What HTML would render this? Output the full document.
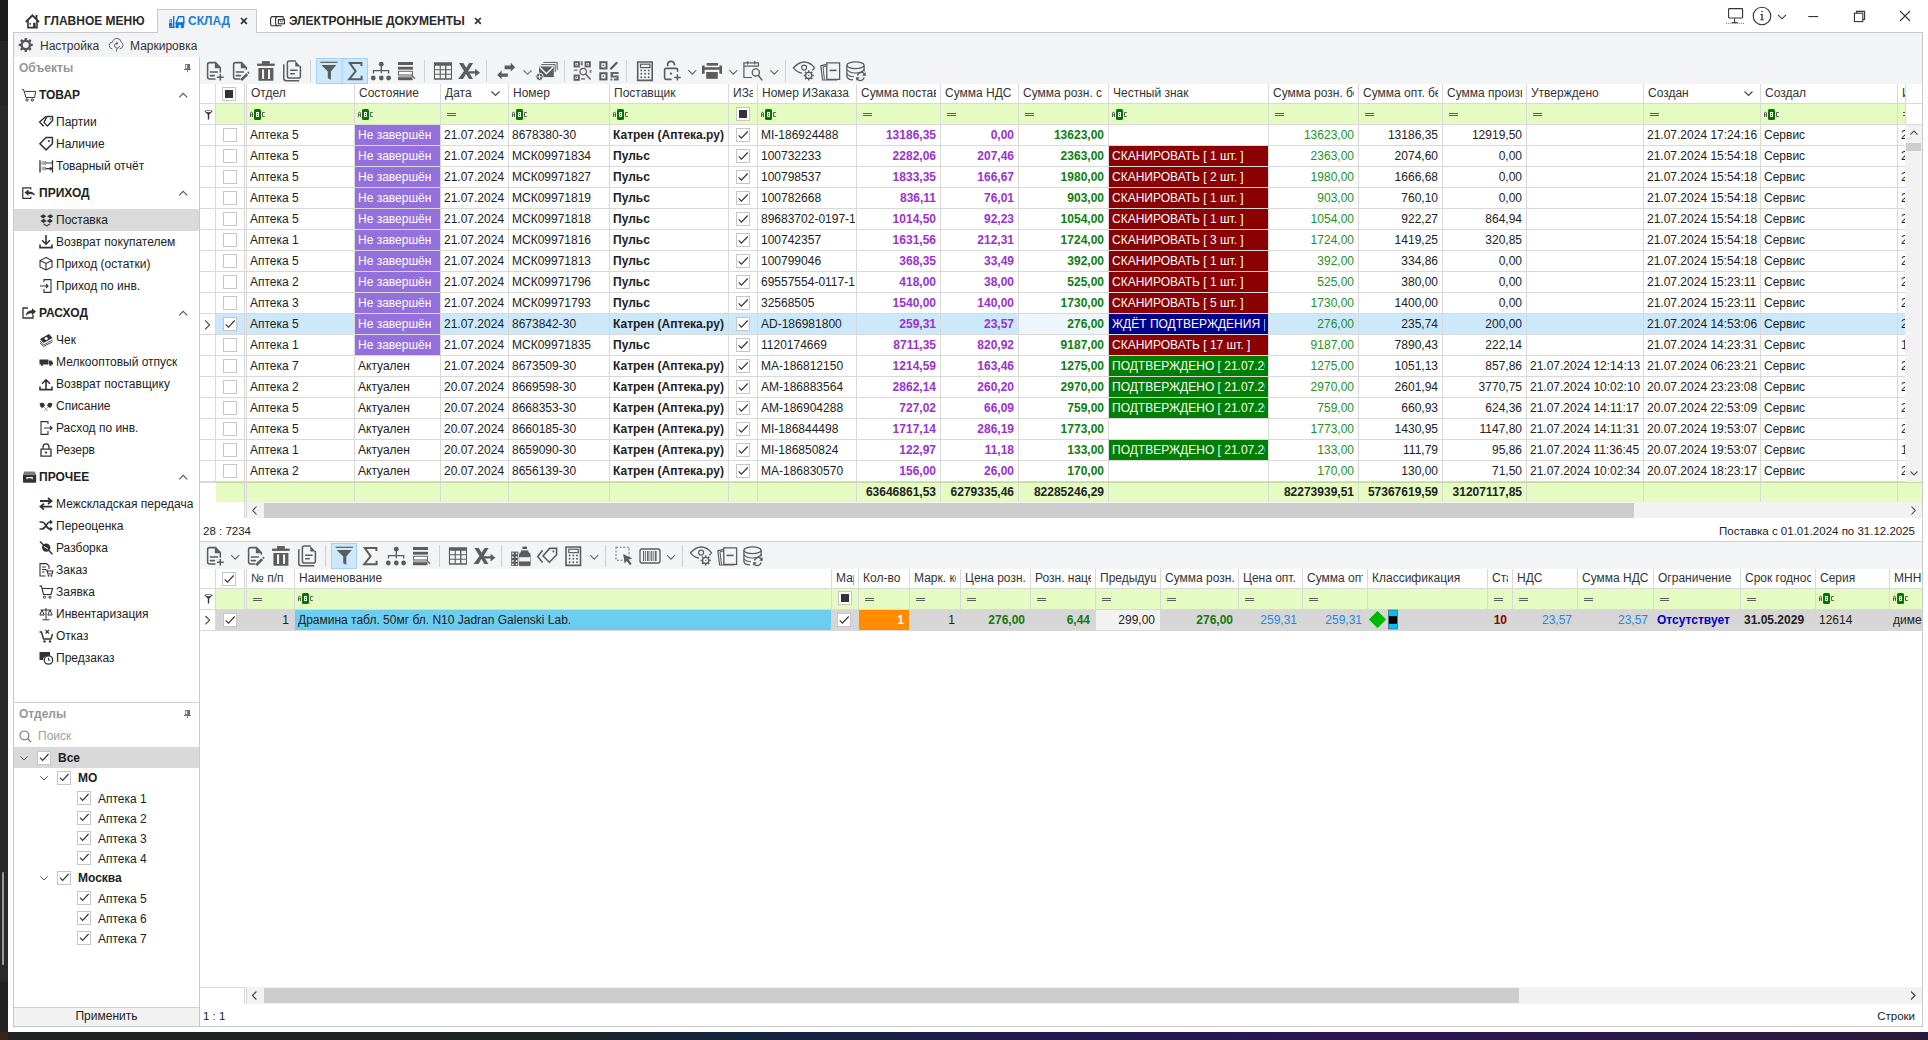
<!DOCTYPE html><html><head><meta charset="utf-8"><style>
*{box-sizing:border-box;margin:0;padding:0}
html,body{width:1928px;height:1040px;overflow:hidden;background:#222}
body{position:relative;font-family:"Liberation Sans",sans-serif;font-size:12px;color:#222}
div{position:absolute}
.t{white-space:nowrap;overflow:hidden}
svg{position:absolute;overflow:visible}
</style></head><body><div style="left:0px;top:0px;width:8px;height:41px;background:#1c1c1c"></div><div style="left:0px;top:41px;width:8px;height:65px;background:#252525"></div><div style="left:0px;top:106px;width:8px;height:876px;background:#2a2a2a"></div><div style="left:0px;top:982px;width:8px;height:50px;background:#222"></div><div style="left:2px;top:872px;width:2px;height:93px;background:#9a9a9a;border-radius:1px"></div><div style="left:0px;top:1032px;width:1928px;height:8px;background:linear-gradient(90deg,#1e2321 0%,#1c2421 28%,#14243c 38%,#1e1a4c 52%,#2a1656 68%,#2a1a48 85%,#2a1a3a 100%)"></div><div style="left:0px;top:1032px;width:8px;height:8px;background:#3a2020"></div><div style="left:8px;top:0px;width:1920px;height:1032px;background:#fff"></div><div style="left:157px;top:9px;width:100px;height:24px;background:#f3f4f6;border:1px solid #c9c9c9;border-bottom:none"></div><div class="t" style="left:44px;top:14px;height:15px;line-height:15px;font-weight:bold;color:#2a2a2a">ГЛАВНОЕ МЕНЮ</div><div class="t" style="left:188px;top:14px;height:15px;line-height:15px;font-weight:bold;color:#1a7fd4">СКЛАД</div><div class="t" style="left:289px;top:14px;height:15px;line-height:15px;font-weight:bold;color:#2a2a2a">ЭЛЕКТРОННЫЕ ДОКУМЕНТЫ</div><div style="left:13px;top:32px;width:1910px;height:995px;background:#f3f4f6;border:1px solid #c9c9c9"></div><div style="left:158px;top:32px;width:98px;height:1px;background:#f3f4f6"></div><div class="t" style="left:40px;top:39px;height:15px;line-height:15px;color:#333">Настройка</div><div class="t" style="left:130px;top:39px;height:15px;line-height:15px;color:#333">Маркировка</div><div style="left:14px;top:57px;width:185px;height:645px;background:#fff"></div><div style="left:199px;top:57px;width:1px;height:970px;background:#c9c9c9"></div><div class="t" style="left:19px;top:61px;height:14px;line-height:14px;color:#979797;font-weight:bold">Объекты</div><div style="left:14px;top:209px;width:185px;height:22px;background:#dadada"></div><div class="t" style="left:39px;top:88px;height:14px;line-height:14px;font-weight:bold;color:#222">ТОВАР</div><div class="t" style="left:56px;top:115px;height:14px;line-height:14px;color:#222">Партии</div><div class="t" style="left:56px;top:137px;height:14px;line-height:14px;color:#222">Наличие</div><div class="t" style="left:56px;top:159px;height:14px;line-height:14px;color:#222">Товарный отчёт</div><div class="t" style="left:39px;top:186px;height:14px;line-height:14px;font-weight:bold;color:#222">ПРИХОД</div><div class="t" style="left:56px;top:213px;height:14px;line-height:14px;color:#222">Поставка</div><div class="t" style="left:56px;top:235px;height:14px;line-height:14px;color:#222">Возврат покупателем</div><div class="t" style="left:56px;top:257px;height:14px;line-height:14px;color:#222">Приход (остатки)</div><div class="t" style="left:56px;top:279px;height:14px;line-height:14px;color:#222">Приход по инв.</div><div class="t" style="left:39px;top:306px;height:14px;line-height:14px;font-weight:bold;color:#222">РАСХОД</div><div class="t" style="left:56px;top:333px;height:14px;line-height:14px;color:#222">Чек</div><div class="t" style="left:56px;top:355px;height:14px;line-height:14px;color:#222">Мелкооптовый отпуск</div><div class="t" style="left:56px;top:377px;height:14px;line-height:14px;color:#222">Возврат поставщику</div><div class="t" style="left:56px;top:399px;height:14px;line-height:14px;color:#222">Списание</div><div class="t" style="left:56px;top:421px;height:14px;line-height:14px;color:#222">Расход по инв.</div><div class="t" style="left:56px;top:443px;height:14px;line-height:14px;color:#222">Резерв</div><div class="t" style="left:39px;top:470px;height:14px;line-height:14px;font-weight:bold;color:#222">ПРОЧЕЕ</div><div class="t" style="left:56px;top:497px;height:14px;line-height:14px;color:#222">Межскладская передача</div><div class="t" style="left:56px;top:519px;height:14px;line-height:14px;color:#222">Переоценка</div><div class="t" style="left:56px;top:541px;height:14px;line-height:14px;color:#222">Разборка</div><div class="t" style="left:56px;top:563px;height:14px;line-height:14px;color:#222">Заказ</div><div class="t" style="left:56px;top:585px;height:14px;line-height:14px;color:#222">Заявка</div><div class="t" style="left:56px;top:607px;height:14px;line-height:14px;color:#222">Инвентаризация</div><div class="t" style="left:56px;top:629px;height:14px;line-height:14px;color:#222">Отказ</div><div class="t" style="left:56px;top:651px;height:14px;line-height:14px;color:#222">Предзаказ</div><div style="left:14px;top:702px;width:185px;height:1px;background:#d0d0d0"></div><div style="left:14px;top:703px;width:185px;height:304px;background:#fff"></div><div class="t" style="left:19px;top:707px;height:14px;line-height:14px;color:#979797;font-weight:bold">Отделы</div><div class="t" style="left:38px;top:729px;height:14px;line-height:14px;color:#a0a0a0">Поиск</div><div style="left:14px;top:747px;width:185px;height:21px;background:#d9d9d9"></div><div style="left:37px;top:751px;width:14px;height:14px;border:1px solid #c6c6c6;background:#fff"></div><div class="t" style="left:58px;top:751px;height:14px;line-height:14px;font-weight:bold;color:#222">Все</div><div style="left:57px;top:771px;width:14px;height:14px;border:1px solid #c6c6c6;background:#fff"></div><div class="t" style="left:78px;top:771px;height:14px;line-height:14px;font-weight:bold;color:#222">МО</div><div style="left:77px;top:791px;width:14px;height:14px;border:1px solid #c6c6c6;background:#fff"></div><div class="t" style="left:98px;top:792px;height:14px;line-height:14px;color:#222">Аптека 1</div><div style="left:77px;top:811px;width:14px;height:14px;border:1px solid #c6c6c6;background:#fff"></div><div class="t" style="left:98px;top:812px;height:14px;line-height:14px;color:#222">Аптека 2</div><div style="left:77px;top:831px;width:14px;height:14px;border:1px solid #c6c6c6;background:#fff"></div><div class="t" style="left:98px;top:832px;height:14px;line-height:14px;color:#222">Аптека 3</div><div style="left:77px;top:851px;width:14px;height:14px;border:1px solid #c6c6c6;background:#fff"></div><div class="t" style="left:98px;top:852px;height:14px;line-height:14px;color:#222">Аптека 4</div><div style="left:57px;top:871px;width:14px;height:14px;border:1px solid #c6c6c6;background:#fff"></div><div class="t" style="left:78px;top:871px;height:14px;line-height:14px;font-weight:bold;color:#222">Москва</div><div style="left:77px;top:891px;width:14px;height:14px;border:1px solid #c6c6c6;background:#fff"></div><div class="t" style="left:98px;top:892px;height:14px;line-height:14px;color:#222">Аптека 5</div><div style="left:77px;top:911px;width:14px;height:14px;border:1px solid #c6c6c6;background:#fff"></div><div class="t" style="left:98px;top:912px;height:14px;line-height:14px;color:#222">Аптека 6</div><div style="left:77px;top:931px;width:14px;height:14px;border:1px solid #c6c6c6;background:#fff"></div><div class="t" style="left:98px;top:932px;height:14px;line-height:14px;color:#222">Аптека 7</div><div style="left:14px;top:1007px;width:185px;height:1px;background:#cfcfcf"></div><div style="left:14px;top:1008px;width:185px;height:18px;background:#f2f2f2"></div><div class="t" style="left:14px;top:1009px;width:185px;height:15px;line-height:15px;text-align:center;color:#222">Применить</div><div style="left:200px;top:84px;width:1722px;height:19px;background:#fff"></div><div style="left:200px;top:104px;width:1722px;height:20px;background:#fff"></div><div style="left:216px;top:104px;width:1689px;height:20px;background:#e4fcc1"></div><div style="left:200px;top:125px;width:1705px;height:357px;background:#fff"></div><div style="left:216px;top:314px;width:1689px;height:20px;background:#cce8fb"></div><div style="left:1019px;top:314px;width:89px;height:20px;background:#eef6fd"></div><div style="left:355px;top:125px;width:85px;height:20px;background:#9370db"></div><div style="left:355px;top:146px;width:85px;height:20px;background:#9370db"></div><div style="left:1109px;top:146px;width:159px;height:20px;background:#8b0000"></div><div style="left:355px;top:167px;width:85px;height:20px;background:#9370db"></div><div style="left:1109px;top:167px;width:159px;height:20px;background:#8b0000"></div><div style="left:355px;top:188px;width:85px;height:20px;background:#9370db"></div><div style="left:1109px;top:188px;width:159px;height:20px;background:#8b0000"></div><div style="left:355px;top:209px;width:85px;height:20px;background:#9370db"></div><div style="left:1109px;top:209px;width:159px;height:20px;background:#8b0000"></div><div style="left:355px;top:230px;width:85px;height:20px;background:#9370db"></div><div style="left:1109px;top:230px;width:159px;height:20px;background:#8b0000"></div><div style="left:355px;top:251px;width:85px;height:20px;background:#9370db"></div><div style="left:1109px;top:251px;width:159px;height:20px;background:#8b0000"></div><div style="left:355px;top:272px;width:85px;height:20px;background:#9370db"></div><div style="left:1109px;top:272px;width:159px;height:20px;background:#8b0000"></div><div style="left:355px;top:293px;width:85px;height:20px;background:#9370db"></div><div style="left:1109px;top:293px;width:159px;height:20px;background:#8b0000"></div><div style="left:355px;top:314px;width:85px;height:20px;background:#9370db"></div><div style="left:1109px;top:314px;width:159px;height:20px;background:#00008b"></div><div style="left:355px;top:335px;width:85px;height:20px;background:#9370db"></div><div style="left:1109px;top:335px;width:159px;height:20px;background:#8b0000"></div><div style="left:1109px;top:356px;width:159px;height:20px;background:#007f00"></div><div style="left:1109px;top:377px;width:159px;height:20px;background:#007f00"></div><div style="left:1109px;top:398px;width:159px;height:20px;background:#007f00"></div><div style="left:1109px;top:440px;width:159px;height:20px;background:#007f00"></div><div style="left:200px;top:103px;width:1722px;height:1px;background:#d9d9d9"></div><div style="left:200px;top:124px;width:1722px;height:1px;background:#d9d9d9"></div><div style="left:200px;top:145px;width:1705px;height:1px;background:#d9d9d9"></div><div style="left:200px;top:166px;width:1705px;height:1px;background:#d9d9d9"></div><div style="left:200px;top:187px;width:1705px;height:1px;background:#d9d9d9"></div><div style="left:200px;top:208px;width:1705px;height:1px;background:#d9d9d9"></div><div style="left:200px;top:229px;width:1705px;height:1px;background:#d9d9d9"></div><div style="left:200px;top:250px;width:1705px;height:1px;background:#d9d9d9"></div><div style="left:200px;top:271px;width:1705px;height:1px;background:#d9d9d9"></div><div style="left:200px;top:292px;width:1705px;height:1px;background:#d9d9d9"></div><div style="left:200px;top:313px;width:1705px;height:1px;background:#d9d9d9"></div><div style="left:200px;top:334px;width:1705px;height:1px;background:#d9d9d9"></div><div style="left:200px;top:355px;width:1705px;height:1px;background:#d9d9d9"></div><div style="left:200px;top:376px;width:1705px;height:1px;background:#d9d9d9"></div><div style="left:200px;top:397px;width:1705px;height:1px;background:#d9d9d9"></div><div style="left:200px;top:418px;width:1705px;height:1px;background:#d9d9d9"></div><div style="left:200px;top:439px;width:1705px;height:1px;background:#d9d9d9"></div><div style="left:200px;top:460px;width:1705px;height:1px;background:#d9d9d9"></div><div style="left:200px;top:481px;width:1705px;height:1px;background:#d9d9d9"></div><div style="left:200px;top:482px;width:16px;height:1px;background:#d9d9d9"></div><div style="left:216px;top:482px;width:1706px;height:1px;background:#c4db9f"></div><div style="left:215px;top:84px;width:1px;height:398px;background:#d9d9d9"></div><div style="left:244px;top:84px;width:1px;height:435px;background:#d9d9d9"></div><div style="left:246px;top:84px;width:1px;height:435px;background:#d9d9d9"></div><div style="left:354px;top:84px;width:1px;height:398px;background:#d9d9d9"></div><div style="left:440px;top:84px;width:1px;height:398px;background:#d9d9d9"></div><div style="left:508px;top:84px;width:1px;height:398px;background:#d9d9d9"></div><div style="left:609px;top:84px;width:1px;height:398px;background:#d9d9d9"></div><div style="left:728px;top:84px;width:1px;height:398px;background:#d9d9d9"></div><div style="left:757px;top:84px;width:1px;height:398px;background:#d9d9d9"></div><div style="left:856px;top:84px;width:1px;height:398px;background:#d9d9d9"></div><div style="left:940px;top:84px;width:1px;height:398px;background:#d9d9d9"></div><div style="left:1018px;top:84px;width:1px;height:398px;background:#d9d9d9"></div><div style="left:1108px;top:84px;width:1px;height:398px;background:#d9d9d9"></div><div style="left:1268px;top:84px;width:1px;height:398px;background:#d9d9d9"></div><div style="left:1358px;top:84px;width:1px;height:398px;background:#d9d9d9"></div><div style="left:1442px;top:84px;width:1px;height:398px;background:#d9d9d9"></div><div style="left:1526px;top:84px;width:1px;height:398px;background:#d9d9d9"></div><div style="left:1643px;top:84px;width:1px;height:398px;background:#d9d9d9"></div><div style="left:1760px;top:84px;width:1px;height:398px;background:#d9d9d9"></div><div style="left:1897px;top:84px;width:1px;height:398px;background:#d9d9d9"></div><div style="left:1905px;top:84px;width:1px;height:41px;background:#d9d9d9"></div><div style="left:216px;top:483px;width:28px;height:19px;background:#e4fcc1"></div><div style="left:247px;top:483px;width:1675px;height:19px;background:#e4fcc1"></div><div style="left:200px;top:483px;width:16px;height:19px;background:#fff"></div><div style="left:354px;top:483px;width:1px;height:19px;background:#d9d9d9"></div><div style="left:440px;top:483px;width:1px;height:19px;background:#d9d9d9"></div><div style="left:508px;top:483px;width:1px;height:19px;background:#d9d9d9"></div><div style="left:609px;top:483px;width:1px;height:19px;background:#d9d9d9"></div><div style="left:728px;top:483px;width:1px;height:19px;background:#d9d9d9"></div><div style="left:757px;top:483px;width:1px;height:19px;background:#d9d9d9"></div><div style="left:856px;top:483px;width:1px;height:19px;background:#d9d9d9"></div><div style="left:940px;top:483px;width:1px;height:19px;background:#d9d9d9"></div><div style="left:1018px;top:483px;width:1px;height:19px;background:#d9d9d9"></div><div style="left:1108px;top:483px;width:1px;height:19px;background:#d9d9d9"></div><div style="left:1268px;top:483px;width:1px;height:19px;background:#d9d9d9"></div><div style="left:1358px;top:483px;width:1px;height:19px;background:#d9d9d9"></div><div style="left:1442px;top:483px;width:1px;height:19px;background:#d9d9d9"></div><div style="left:1526px;top:483px;width:1px;height:19px;background:#d9d9d9"></div><div style="left:1643px;top:483px;width:1px;height:19px;background:#d9d9d9"></div><div style="left:1760px;top:483px;width:1px;height:19px;background:#d9d9d9"></div><div style="left:1897px;top:483px;width:1px;height:19px;background:#d9d9d9"></div><div style="left:244px;top:483px;width:1px;height:19px;background:#cfcfcf"></div><div style="left:222px;top:87px;width:14px;height:14px;border:1px solid #c6c6c6;background:#fff"></div><div style="left:225px;top:90px;width:8px;height:8px;background:#333"></div><div class="t" style="left:251px;top:85px;width:99px;height:17px;line-height:17px;color:#333">Отдел</div><svg style="left:249px;top:109px" width="17" height="11" viewBox="0 0 17 11"><path d="M1.5 8V4.3Q1.5 3.2 2.5 3.2Q3.5 3.2 3.5 4.3V8M1.5 5.8H3.5" stroke="#5a5a5a" stroke-width="1" fill="none"/><rect x="5" y="0" width="7" height="11" rx="1.5" fill="#007800"/><rect x="7" y="3" width="3" height="5" fill="#fbfff5"/><rect x="8" y="4" width="1" height="1" fill="#007800"/><rect x="8" y="6" width="1" height="1" fill="#007800"/><path d="M15.8 3.5H13.5V7.5H15.8" stroke="#5a5a5a" stroke-width="1" fill="none"/></svg><div class="t" style="left:359px;top:85px;width:77px;height:17px;line-height:17px;color:#333">Состояние</div><svg style="left:357px;top:109px" width="17" height="11" viewBox="0 0 17 11"><path d="M1.5 8V4.3Q1.5 3.2 2.5 3.2Q3.5 3.2 3.5 4.3V8M1.5 5.8H3.5" stroke="#5a5a5a" stroke-width="1" fill="none"/><rect x="5" y="0" width="7" height="11" rx="1.5" fill="#007800"/><rect x="7" y="3" width="3" height="5" fill="#fbfff5"/><rect x="8" y="4" width="1" height="1" fill="#007800"/><rect x="8" y="6" width="1" height="1" fill="#007800"/><path d="M15.8 3.5H13.5V7.5H15.8" stroke="#5a5a5a" stroke-width="1" fill="none"/></svg><div class="t" style="left:445px;top:85px;width:48px;height:17px;line-height:17px;color:#333">Дата</div><div style="left:447px;top:113px;width:9px;height:3px;border-top:1px solid #5c5c5c;border-bottom:1px solid #5c5c5c"></div><div class="t" style="left:513px;top:85px;width:92px;height:17px;line-height:17px;color:#333">Номер</div><svg style="left:511px;top:109px" width="17" height="11" viewBox="0 0 17 11"><path d="M1.5 8V4.3Q1.5 3.2 2.5 3.2Q3.5 3.2 3.5 4.3V8M1.5 5.8H3.5" stroke="#5a5a5a" stroke-width="1" fill="none"/><rect x="5" y="0" width="7" height="11" rx="1.5" fill="#007800"/><rect x="7" y="3" width="3" height="5" fill="#fbfff5"/><rect x="8" y="4" width="1" height="1" fill="#007800"/><rect x="8" y="6" width="1" height="1" fill="#007800"/><path d="M15.8 3.5H13.5V7.5H15.8" stroke="#5a5a5a" stroke-width="1" fill="none"/></svg><div class="t" style="left:614px;top:85px;width:110px;height:17px;line-height:17px;color:#333">Поставщик</div><svg style="left:612px;top:109px" width="17" height="11" viewBox="0 0 17 11"><path d="M1.5 8V4.3Q1.5 3.2 2.5 3.2Q3.5 3.2 3.5 4.3V8M1.5 5.8H3.5" stroke="#5a5a5a" stroke-width="1" fill="none"/><rect x="5" y="0" width="7" height="11" rx="1.5" fill="#007800"/><rect x="7" y="3" width="3" height="5" fill="#fbfff5"/><rect x="8" y="4" width="1" height="1" fill="#007800"/><rect x="8" y="6" width="1" height="1" fill="#007800"/><path d="M15.8 3.5H13.5V7.5H15.8" stroke="#5a5a5a" stroke-width="1" fill="none"/></svg><div class="t" style="left:733px;top:85px;width:20px;height:17px;line-height:17px;color:#333">ИЗа</div><div style="left:736px;top:107px;width:14px;height:14px;border:1px solid #c6c6c6;background:#fff"></div><div style="left:739px;top:110px;width:8px;height:8px;background:#333"></div><div class="t" style="left:762px;top:85px;width:90px;height:17px;line-height:17px;color:#333">Номер ИЗаказа</div><svg style="left:760px;top:109px" width="17" height="11" viewBox="0 0 17 11"><path d="M1.5 8V4.3Q1.5 3.2 2.5 3.2Q3.5 3.2 3.5 4.3V8M1.5 5.8H3.5" stroke="#5a5a5a" stroke-width="1" fill="none"/><rect x="5" y="0" width="7" height="11" rx="1.5" fill="#007800"/><rect x="7" y="3" width="3" height="5" fill="#fbfff5"/><rect x="8" y="4" width="1" height="1" fill="#007800"/><rect x="8" y="6" width="1" height="1" fill="#007800"/><path d="M15.8 3.5H13.5V7.5H15.8" stroke="#5a5a5a" stroke-width="1" fill="none"/></svg><div class="t" style="left:861px;top:85px;width:75px;height:17px;line-height:17px;color:#333">Сумма поставщика</div><div style="left:863px;top:113px;width:9px;height:3px;border-top:1px solid #5c5c5c;border-bottom:1px solid #5c5c5c"></div><div class="t" style="left:945px;top:85px;width:69px;height:17px;line-height:17px;color:#333">Сумма НДС</div><div style="left:947px;top:113px;width:9px;height:3px;border-top:1px solid #5c5c5c;border-bottom:1px solid #5c5c5c"></div><div class="t" style="left:1023px;top:85px;width:81px;height:17px;line-height:17px;color:#333">Сумма розн. с НДС</div><div style="left:1025px;top:113px;width:9px;height:3px;border-top:1px solid #5c5c5c;border-bottom:1px solid #5c5c5c"></div><div class="t" style="left:1113px;top:85px;width:151px;height:17px;line-height:17px;color:#333">Честный знак</div><svg style="left:1111px;top:109px" width="17" height="11" viewBox="0 0 17 11"><path d="M1.5 8V4.3Q1.5 3.2 2.5 3.2Q3.5 3.2 3.5 4.3V8M1.5 5.8H3.5" stroke="#5a5a5a" stroke-width="1" fill="none"/><rect x="5" y="0" width="7" height="11" rx="1.5" fill="#007800"/><rect x="7" y="3" width="3" height="5" fill="#fbfff5"/><rect x="8" y="4" width="1" height="1" fill="#007800"/><rect x="8" y="6" width="1" height="1" fill="#007800"/><path d="M15.8 3.5H13.5V7.5H15.8" stroke="#5a5a5a" stroke-width="1" fill="none"/></svg><div class="t" style="left:1273px;top:85px;width:81px;height:17px;line-height:17px;color:#333">Сумма розн. без НДС</div><div style="left:1275px;top:113px;width:9px;height:3px;border-top:1px solid #5c5c5c;border-bottom:1px solid #5c5c5c"></div><div class="t" style="left:1363px;top:85px;width:75px;height:17px;line-height:17px;color:#333">Сумма опт. без НДС</div><div style="left:1365px;top:113px;width:9px;height:3px;border-top:1px solid #5c5c5c;border-bottom:1px solid #5c5c5c"></div><div class="t" style="left:1447px;top:85px;width:75px;height:17px;line-height:17px;color:#333">Сумма производителя</div><div style="left:1449px;top:113px;width:9px;height:3px;border-top:1px solid #5c5c5c;border-bottom:1px solid #5c5c5c"></div><div class="t" style="left:1531px;top:85px;width:108px;height:17px;line-height:17px;color:#333">Утверждено</div><div style="left:1533px;top:113px;width:9px;height:3px;border-top:1px solid #5c5c5c;border-bottom:1px solid #5c5c5c"></div><div class="t" style="left:1648px;top:85px;width:97px;height:17px;line-height:17px;color:#333">Создан</div><div style="left:1650px;top:113px;width:9px;height:3px;border-top:1px solid #5c5c5c;border-bottom:1px solid #5c5c5c"></div><div class="t" style="left:1765px;top:85px;width:128px;height:17px;line-height:17px;color:#333">Создал</div><svg style="left:1763px;top:109px" width="17" height="11" viewBox="0 0 17 11"><path d="M1.5 8V4.3Q1.5 3.2 2.5 3.2Q3.5 3.2 3.5 4.3V8M1.5 5.8H3.5" stroke="#5a5a5a" stroke-width="1" fill="none"/><rect x="5" y="0" width="7" height="11" rx="1.5" fill="#007800"/><rect x="7" y="3" width="3" height="5" fill="#fbfff5"/><rect x="8" y="4" width="1" height="1" fill="#007800"/><rect x="8" y="6" width="1" height="1" fill="#007800"/><path d="M15.8 3.5H13.5V7.5H15.8" stroke="#5a5a5a" stroke-width="1" fill="none"/></svg><div class="t" style="left:1902px;top:85px;width:3px;height:17px;line-height:17px;color:#333">Изменён</div><div style="left:1903px;top:112px;width:2px;height:4px;border-top:1px solid #555;border-bottom:1px solid #555"></div><svg style="left:491px;top:91px" width="9" height="5" viewBox="0 0 9 5"><path d="M0.5 0.5L4.5 4.5L8.5 0.5" stroke="#444" stroke-width="1.1" fill="none"/></svg><svg style="left:1744px;top:91px" width="9" height="5" viewBox="0 0 9 5"><path d="M0.5 0.5L4.5 4.5L8.5 0.5" stroke="#444" stroke-width="1.1" fill="none"/></svg><svg style="left:204px;top:110px" width="9" height="10" viewBox="0 0 9 10"><path d="M0.5 1.5Q0.5 0.3 4.5 0.3Q8.5 0.3 8.5 1.5L5.2 4.6V9.5H3.8V4.6Z" fill="#333"/><ellipse cx="4.5" cy="1.5" rx="3" ry="0.8" fill="#fff"/></svg><div style="left:223px;top:128px;width:14px;height:14px;border:1px solid #c6c6c6;background:#fff"></div><div class="t" style="left:250px;top:125px;width:100px;height:20px;line-height:20px;">Аптека 5</div><div class="t" style="left:358px;top:125px;width:80px;height:20px;line-height:20px;color:#fff">Не завершён</div><div class="t" style="left:444px;top:125px;width:62px;height:20px;line-height:20px;">21.07.2024</div><div class="t" style="left:512px;top:125px;width:95px;height:20px;line-height:20px;">8678380-30</div><div class="t" style="left:613px;top:125px;width:114px;height:20px;line-height:20px;font-weight:bold">Катрен (Аптека.ру)</div><div style="left:736px;top:128px;width:14px;height:14px;border:1px solid #c6c6c6;background:#fff"></div><svg style="left:736px;top:128px" width="14" height="14" viewBox="0 0 14 14"><path d="M2.7 7.4L5.4 10.2L11.7 3.5" stroke="#333" stroke-width="1.15" fill="none"/></svg><div class="t" style="left:761px;top:125px;width:94px;height:20px;line-height:20px;">MI-186924488</div><div class="t" style="left:857px;top:125px;width:79px;height:20px;line-height:20px;text-align:right;font-weight:bold;color:#9a32cd">13186,35</div><div class="t" style="left:941px;top:125px;width:73px;height:20px;line-height:20px;text-align:right;font-weight:bold;color:#9a32cd">0,00</div><div class="t" style="left:1019px;top:125px;width:85px;height:20px;line-height:20px;text-align:right;font-weight:bold;color:#0e7d0e">13623,00</div><div class="t" style="left:1269px;top:125px;width:85px;height:20px;line-height:20px;text-align:right;color:#1f8f1f">13623,00</div><div class="t" style="left:1359px;top:125px;width:79px;height:20px;line-height:20px;text-align:right;">13186,35</div><div class="t" style="left:1443px;top:125px;width:79px;height:20px;line-height:20px;text-align:right;">12919,50</div><div class="t" style="left:1647px;top:125px;width:112px;height:20px;line-height:20px;">21.07.2024 17:24:16</div><div class="t" style="left:1764px;top:125px;width:130px;height:20px;line-height:20px;">Сервис</div><div class="t" style="left:1901px;top:125px;width:4px;height:20px;line-height:20px;">2</div><div style="left:223px;top:149px;width:14px;height:14px;border:1px solid #c6c6c6;background:#fff"></div><div class="t" style="left:250px;top:146px;width:100px;height:20px;line-height:20px;">Аптека 5</div><div class="t" style="left:358px;top:146px;width:80px;height:20px;line-height:20px;color:#fff">Не завершён</div><div class="t" style="left:444px;top:146px;width:62px;height:20px;line-height:20px;">21.07.2024</div><div class="t" style="left:512px;top:146px;width:95px;height:20px;line-height:20px;">МСК09971834</div><div class="t" style="left:613px;top:146px;width:114px;height:20px;line-height:20px;font-weight:bold">Пульс</div><div style="left:736px;top:149px;width:14px;height:14px;border:1px solid #c6c6c6;background:#fff"></div><svg style="left:736px;top:149px" width="14" height="14" viewBox="0 0 14 14"><path d="M2.7 7.4L5.4 10.2L11.7 3.5" stroke="#333" stroke-width="1.15" fill="none"/></svg><div class="t" style="left:761px;top:146px;width:94px;height:20px;line-height:20px;">100732233</div><div class="t" style="left:857px;top:146px;width:79px;height:20px;line-height:20px;text-align:right;font-weight:bold;color:#9a32cd">2282,06</div><div class="t" style="left:941px;top:146px;width:73px;height:20px;line-height:20px;text-align:right;font-weight:bold;color:#9a32cd">207,46</div><div class="t" style="left:1019px;top:146px;width:85px;height:20px;line-height:20px;text-align:right;font-weight:bold;color:#0e7d0e">2363,00</div><div class="t" style="left:1112px;top:146px;width:153px;height:20px;line-height:20px;color:#fff">СКАНИРОВАТЬ [ 1 шт. ]</div><div class="t" style="left:1269px;top:146px;width:85px;height:20px;line-height:20px;text-align:right;color:#1f8f1f">2363,00</div><div class="t" style="left:1359px;top:146px;width:79px;height:20px;line-height:20px;text-align:right;">2074,60</div><div class="t" style="left:1443px;top:146px;width:79px;height:20px;line-height:20px;text-align:right;">0,00</div><div class="t" style="left:1647px;top:146px;width:112px;height:20px;line-height:20px;">21.07.2024 15:54:18</div><div class="t" style="left:1764px;top:146px;width:130px;height:20px;line-height:20px;">Сервис</div><div class="t" style="left:1901px;top:146px;width:4px;height:20px;line-height:20px;">2</div><div style="left:223px;top:170px;width:14px;height:14px;border:1px solid #c6c6c6;background:#fff"></div><div class="t" style="left:250px;top:167px;width:100px;height:20px;line-height:20px;">Аптека 5</div><div class="t" style="left:358px;top:167px;width:80px;height:20px;line-height:20px;color:#fff">Не завершён</div><div class="t" style="left:444px;top:167px;width:62px;height:20px;line-height:20px;">21.07.2024</div><div class="t" style="left:512px;top:167px;width:95px;height:20px;line-height:20px;">МСК09971827</div><div class="t" style="left:613px;top:167px;width:114px;height:20px;line-height:20px;font-weight:bold">Пульс</div><div style="left:736px;top:170px;width:14px;height:14px;border:1px solid #c6c6c6;background:#fff"></div><svg style="left:736px;top:170px" width="14" height="14" viewBox="0 0 14 14"><path d="M2.7 7.4L5.4 10.2L11.7 3.5" stroke="#333" stroke-width="1.15" fill="none"/></svg><div class="t" style="left:761px;top:167px;width:94px;height:20px;line-height:20px;">100798537</div><div class="t" style="left:857px;top:167px;width:79px;height:20px;line-height:20px;text-align:right;font-weight:bold;color:#9a32cd">1833,35</div><div class="t" style="left:941px;top:167px;width:73px;height:20px;line-height:20px;text-align:right;font-weight:bold;color:#9a32cd">166,67</div><div class="t" style="left:1019px;top:167px;width:85px;height:20px;line-height:20px;text-align:right;font-weight:bold;color:#0e7d0e">1980,00</div><div class="t" style="left:1112px;top:167px;width:153px;height:20px;line-height:20px;color:#fff">СКАНИРОВАТЬ [ 2 шт. ]</div><div class="t" style="left:1269px;top:167px;width:85px;height:20px;line-height:20px;text-align:right;color:#1f8f1f">1980,00</div><div class="t" style="left:1359px;top:167px;width:79px;height:20px;line-height:20px;text-align:right;">1666,68</div><div class="t" style="left:1443px;top:167px;width:79px;height:20px;line-height:20px;text-align:right;">0,00</div><div class="t" style="left:1647px;top:167px;width:112px;height:20px;line-height:20px;">21.07.2024 15:54:18</div><div class="t" style="left:1764px;top:167px;width:130px;height:20px;line-height:20px;">Сервис</div><div class="t" style="left:1901px;top:167px;width:4px;height:20px;line-height:20px;">2</div><div style="left:223px;top:191px;width:14px;height:14px;border:1px solid #c6c6c6;background:#fff"></div><div class="t" style="left:250px;top:188px;width:100px;height:20px;line-height:20px;">Аптека 5</div><div class="t" style="left:358px;top:188px;width:80px;height:20px;line-height:20px;color:#fff">Не завершён</div><div class="t" style="left:444px;top:188px;width:62px;height:20px;line-height:20px;">21.07.2024</div><div class="t" style="left:512px;top:188px;width:95px;height:20px;line-height:20px;">МСК09971819</div><div class="t" style="left:613px;top:188px;width:114px;height:20px;line-height:20px;font-weight:bold">Пульс</div><div style="left:736px;top:191px;width:14px;height:14px;border:1px solid #c6c6c6;background:#fff"></div><svg style="left:736px;top:191px" width="14" height="14" viewBox="0 0 14 14"><path d="M2.7 7.4L5.4 10.2L11.7 3.5" stroke="#333" stroke-width="1.15" fill="none"/></svg><div class="t" style="left:761px;top:188px;width:94px;height:20px;line-height:20px;">100782668</div><div class="t" style="left:857px;top:188px;width:79px;height:20px;line-height:20px;text-align:right;font-weight:bold;color:#9a32cd">836,11</div><div class="t" style="left:941px;top:188px;width:73px;height:20px;line-height:20px;text-align:right;font-weight:bold;color:#9a32cd">76,01</div><div class="t" style="left:1019px;top:188px;width:85px;height:20px;line-height:20px;text-align:right;font-weight:bold;color:#0e7d0e">903,00</div><div class="t" style="left:1112px;top:188px;width:153px;height:20px;line-height:20px;color:#fff">СКАНИРОВАТЬ [ 1 шт. ]</div><div class="t" style="left:1269px;top:188px;width:85px;height:20px;line-height:20px;text-align:right;color:#1f8f1f">903,00</div><div class="t" style="left:1359px;top:188px;width:79px;height:20px;line-height:20px;text-align:right;">760,10</div><div class="t" style="left:1443px;top:188px;width:79px;height:20px;line-height:20px;text-align:right;">0,00</div><div class="t" style="left:1647px;top:188px;width:112px;height:20px;line-height:20px;">21.07.2024 15:54:18</div><div class="t" style="left:1764px;top:188px;width:130px;height:20px;line-height:20px;">Сервис</div><div class="t" style="left:1901px;top:188px;width:4px;height:20px;line-height:20px;">2</div><div style="left:223px;top:212px;width:14px;height:14px;border:1px solid #c6c6c6;background:#fff"></div><div class="t" style="left:250px;top:209px;width:100px;height:20px;line-height:20px;">Аптека 5</div><div class="t" style="left:358px;top:209px;width:80px;height:20px;line-height:20px;color:#fff">Не завершён</div><div class="t" style="left:444px;top:209px;width:62px;height:20px;line-height:20px;">21.07.2024</div><div class="t" style="left:512px;top:209px;width:95px;height:20px;line-height:20px;">МСК09971818</div><div class="t" style="left:613px;top:209px;width:114px;height:20px;line-height:20px;font-weight:bold">Пульс</div><div style="left:736px;top:212px;width:14px;height:14px;border:1px solid #c6c6c6;background:#fff"></div><svg style="left:736px;top:212px" width="14" height="14" viewBox="0 0 14 14"><path d="M2.7 7.4L5.4 10.2L11.7 3.5" stroke="#333" stroke-width="1.15" fill="none"/></svg><div class="t" style="left:761px;top:209px;width:94px;height:20px;line-height:20px;">89683702-0197-1</div><div class="t" style="left:857px;top:209px;width:79px;height:20px;line-height:20px;text-align:right;font-weight:bold;color:#9a32cd">1014,50</div><div class="t" style="left:941px;top:209px;width:73px;height:20px;line-height:20px;text-align:right;font-weight:bold;color:#9a32cd">92,23</div><div class="t" style="left:1019px;top:209px;width:85px;height:20px;line-height:20px;text-align:right;font-weight:bold;color:#0e7d0e">1054,00</div><div class="t" style="left:1112px;top:209px;width:153px;height:20px;line-height:20px;color:#fff">СКАНИРОВАТЬ [ 1 шт. ]</div><div class="t" style="left:1269px;top:209px;width:85px;height:20px;line-height:20px;text-align:right;color:#1f8f1f">1054,00</div><div class="t" style="left:1359px;top:209px;width:79px;height:20px;line-height:20px;text-align:right;">922,27</div><div class="t" style="left:1443px;top:209px;width:79px;height:20px;line-height:20px;text-align:right;">864,94</div><div class="t" style="left:1647px;top:209px;width:112px;height:20px;line-height:20px;">21.07.2024 15:54:18</div><div class="t" style="left:1764px;top:209px;width:130px;height:20px;line-height:20px;">Сервис</div><div class="t" style="left:1901px;top:209px;width:4px;height:20px;line-height:20px;">2</div><div style="left:223px;top:233px;width:14px;height:14px;border:1px solid #c6c6c6;background:#fff"></div><div class="t" style="left:250px;top:230px;width:100px;height:20px;line-height:20px;">Аптека 1</div><div class="t" style="left:358px;top:230px;width:80px;height:20px;line-height:20px;color:#fff">Не завершён</div><div class="t" style="left:444px;top:230px;width:62px;height:20px;line-height:20px;">21.07.2024</div><div class="t" style="left:512px;top:230px;width:95px;height:20px;line-height:20px;">МСК09971816</div><div class="t" style="left:613px;top:230px;width:114px;height:20px;line-height:20px;font-weight:bold">Пульс</div><div style="left:736px;top:233px;width:14px;height:14px;border:1px solid #c6c6c6;background:#fff"></div><svg style="left:736px;top:233px" width="14" height="14" viewBox="0 0 14 14"><path d="M2.7 7.4L5.4 10.2L11.7 3.5" stroke="#333" stroke-width="1.15" fill="none"/></svg><div class="t" style="left:761px;top:230px;width:94px;height:20px;line-height:20px;">100742357</div><div class="t" style="left:857px;top:230px;width:79px;height:20px;line-height:20px;text-align:right;font-weight:bold;color:#9a32cd">1631,56</div><div class="t" style="left:941px;top:230px;width:73px;height:20px;line-height:20px;text-align:right;font-weight:bold;color:#9a32cd">212,31</div><div class="t" style="left:1019px;top:230px;width:85px;height:20px;line-height:20px;text-align:right;font-weight:bold;color:#0e7d0e">1724,00</div><div class="t" style="left:1112px;top:230px;width:153px;height:20px;line-height:20px;color:#fff">СКАНИРОВАТЬ [ 3 шт. ]</div><div class="t" style="left:1269px;top:230px;width:85px;height:20px;line-height:20px;text-align:right;color:#1f8f1f">1724,00</div><div class="t" style="left:1359px;top:230px;width:79px;height:20px;line-height:20px;text-align:right;">1419,25</div><div class="t" style="left:1443px;top:230px;width:79px;height:20px;line-height:20px;text-align:right;">320,85</div><div class="t" style="left:1647px;top:230px;width:112px;height:20px;line-height:20px;">21.07.2024 15:54:18</div><div class="t" style="left:1764px;top:230px;width:130px;height:20px;line-height:20px;">Сервис</div><div class="t" style="left:1901px;top:230px;width:4px;height:20px;line-height:20px;">2</div><div style="left:223px;top:254px;width:14px;height:14px;border:1px solid #c6c6c6;background:#fff"></div><div class="t" style="left:250px;top:251px;width:100px;height:20px;line-height:20px;">Аптека 5</div><div class="t" style="left:358px;top:251px;width:80px;height:20px;line-height:20px;color:#fff">Не завершён</div><div class="t" style="left:444px;top:251px;width:62px;height:20px;line-height:20px;">21.07.2024</div><div class="t" style="left:512px;top:251px;width:95px;height:20px;line-height:20px;">МСК09971813</div><div class="t" style="left:613px;top:251px;width:114px;height:20px;line-height:20px;font-weight:bold">Пульс</div><div style="left:736px;top:254px;width:14px;height:14px;border:1px solid #c6c6c6;background:#fff"></div><svg style="left:736px;top:254px" width="14" height="14" viewBox="0 0 14 14"><path d="M2.7 7.4L5.4 10.2L11.7 3.5" stroke="#333" stroke-width="1.15" fill="none"/></svg><div class="t" style="left:761px;top:251px;width:94px;height:20px;line-height:20px;">100799046</div><div class="t" style="left:857px;top:251px;width:79px;height:20px;line-height:20px;text-align:right;font-weight:bold;color:#9a32cd">368,35</div><div class="t" style="left:941px;top:251px;width:73px;height:20px;line-height:20px;text-align:right;font-weight:bold;color:#9a32cd">33,49</div><div class="t" style="left:1019px;top:251px;width:85px;height:20px;line-height:20px;text-align:right;font-weight:bold;color:#0e7d0e">392,00</div><div class="t" style="left:1112px;top:251px;width:153px;height:20px;line-height:20px;color:#fff">СКАНИРОВАТЬ [ 1 шт. ]</div><div class="t" style="left:1269px;top:251px;width:85px;height:20px;line-height:20px;text-align:right;color:#1f8f1f">392,00</div><div class="t" style="left:1359px;top:251px;width:79px;height:20px;line-height:20px;text-align:right;">334,86</div><div class="t" style="left:1443px;top:251px;width:79px;height:20px;line-height:20px;text-align:right;">0,00</div><div class="t" style="left:1647px;top:251px;width:112px;height:20px;line-height:20px;">21.07.2024 15:54:18</div><div class="t" style="left:1764px;top:251px;width:130px;height:20px;line-height:20px;">Сервис</div><div class="t" style="left:1901px;top:251px;width:4px;height:20px;line-height:20px;">2</div><div style="left:223px;top:275px;width:14px;height:14px;border:1px solid #c6c6c6;background:#fff"></div><div class="t" style="left:250px;top:272px;width:100px;height:20px;line-height:20px;">Аптека 2</div><div class="t" style="left:358px;top:272px;width:80px;height:20px;line-height:20px;color:#fff">Не завершён</div><div class="t" style="left:444px;top:272px;width:62px;height:20px;line-height:20px;">21.07.2024</div><div class="t" style="left:512px;top:272px;width:95px;height:20px;line-height:20px;">МСК09971796</div><div class="t" style="left:613px;top:272px;width:114px;height:20px;line-height:20px;font-weight:bold">Пульс</div><div style="left:736px;top:275px;width:14px;height:14px;border:1px solid #c6c6c6;background:#fff"></div><svg style="left:736px;top:275px" width="14" height="14" viewBox="0 0 14 14"><path d="M2.7 7.4L5.4 10.2L11.7 3.5" stroke="#333" stroke-width="1.15" fill="none"/></svg><div class="t" style="left:761px;top:272px;width:94px;height:20px;line-height:20px;">69557554-0117-1</div><div class="t" style="left:857px;top:272px;width:79px;height:20px;line-height:20px;text-align:right;font-weight:bold;color:#9a32cd">418,00</div><div class="t" style="left:941px;top:272px;width:73px;height:20px;line-height:20px;text-align:right;font-weight:bold;color:#9a32cd">38,00</div><div class="t" style="left:1019px;top:272px;width:85px;height:20px;line-height:20px;text-align:right;font-weight:bold;color:#0e7d0e">525,00</div><div class="t" style="left:1112px;top:272px;width:153px;height:20px;line-height:20px;color:#fff">СКАНИРОВАТЬ [ 1 шт. ]</div><div class="t" style="left:1269px;top:272px;width:85px;height:20px;line-height:20px;text-align:right;color:#1f8f1f">525,00</div><div class="t" style="left:1359px;top:272px;width:79px;height:20px;line-height:20px;text-align:right;">380,00</div><div class="t" style="left:1443px;top:272px;width:79px;height:20px;line-height:20px;text-align:right;">0,00</div><div class="t" style="left:1647px;top:272px;width:112px;height:20px;line-height:20px;">21.07.2024 15:23:11</div><div class="t" style="left:1764px;top:272px;width:130px;height:20px;line-height:20px;">Сервис</div><div class="t" style="left:1901px;top:272px;width:4px;height:20px;line-height:20px;">2</div><div style="left:223px;top:296px;width:14px;height:14px;border:1px solid #c6c6c6;background:#fff"></div><div class="t" style="left:250px;top:293px;width:100px;height:20px;line-height:20px;">Аптека 3</div><div class="t" style="left:358px;top:293px;width:80px;height:20px;line-height:20px;color:#fff">Не завершён</div><div class="t" style="left:444px;top:293px;width:62px;height:20px;line-height:20px;">21.07.2024</div><div class="t" style="left:512px;top:293px;width:95px;height:20px;line-height:20px;">МСК09971793</div><div class="t" style="left:613px;top:293px;width:114px;height:20px;line-height:20px;font-weight:bold">Пульс</div><div style="left:736px;top:296px;width:14px;height:14px;border:1px solid #c6c6c6;background:#fff"></div><svg style="left:736px;top:296px" width="14" height="14" viewBox="0 0 14 14"><path d="M2.7 7.4L5.4 10.2L11.7 3.5" stroke="#333" stroke-width="1.15" fill="none"/></svg><div class="t" style="left:761px;top:293px;width:94px;height:20px;line-height:20px;">32568505</div><div class="t" style="left:857px;top:293px;width:79px;height:20px;line-height:20px;text-align:right;font-weight:bold;color:#9a32cd">1540,00</div><div class="t" style="left:941px;top:293px;width:73px;height:20px;line-height:20px;text-align:right;font-weight:bold;color:#9a32cd">140,00</div><div class="t" style="left:1019px;top:293px;width:85px;height:20px;line-height:20px;text-align:right;font-weight:bold;color:#0e7d0e">1730,00</div><div class="t" style="left:1112px;top:293px;width:153px;height:20px;line-height:20px;color:#fff">СКАНИРОВАТЬ [ 5 шт. ]</div><div class="t" style="left:1269px;top:293px;width:85px;height:20px;line-height:20px;text-align:right;color:#1f8f1f">1730,00</div><div class="t" style="left:1359px;top:293px;width:79px;height:20px;line-height:20px;text-align:right;">1400,00</div><div class="t" style="left:1443px;top:293px;width:79px;height:20px;line-height:20px;text-align:right;">0,00</div><div class="t" style="left:1647px;top:293px;width:112px;height:20px;line-height:20px;">21.07.2024 15:23:11</div><div class="t" style="left:1764px;top:293px;width:130px;height:20px;line-height:20px;">Сервис</div><div class="t" style="left:1901px;top:293px;width:4px;height:20px;line-height:20px;">2</div><div style="left:223px;top:317px;width:14px;height:14px;border:1px solid #c6c6c6;background:#fff"></div><svg style="left:223px;top:317px" width="14" height="14" viewBox="0 0 14 14"><path d="M2.7 7.4L5.4 10.2L11.7 3.5" stroke="#333" stroke-width="1.15" fill="none"/></svg><div class="t" style="left:250px;top:314px;width:100px;height:20px;line-height:20px;">Аптека 5</div><div class="t" style="left:358px;top:314px;width:80px;height:20px;line-height:20px;color:#fff">Не завершён</div><div class="t" style="left:444px;top:314px;width:62px;height:20px;line-height:20px;">21.07.2024</div><div class="t" style="left:512px;top:314px;width:95px;height:20px;line-height:20px;">8673842-30</div><div class="t" style="left:613px;top:314px;width:114px;height:20px;line-height:20px;font-weight:bold">Катрен (Аптека.ру)</div><div style="left:736px;top:317px;width:14px;height:14px;border:1px solid #c6c6c6;background:#fff"></div><svg style="left:736px;top:317px" width="14" height="14" viewBox="0 0 14 14"><path d="M2.7 7.4L5.4 10.2L11.7 3.5" stroke="#333" stroke-width="1.15" fill="none"/></svg><div class="t" style="left:761px;top:314px;width:94px;height:20px;line-height:20px;">AD-186981800</div><div class="t" style="left:857px;top:314px;width:79px;height:20px;line-height:20px;text-align:right;font-weight:bold;color:#9a32cd">259,31</div><div class="t" style="left:941px;top:314px;width:73px;height:20px;line-height:20px;text-align:right;font-weight:bold;color:#9a32cd">23,57</div><div class="t" style="left:1019px;top:314px;width:85px;height:20px;line-height:20px;text-align:right;font-weight:bold;color:#0e7d0e">276,00</div><div class="t" style="left:1112px;top:314px;width:153px;height:20px;line-height:20px;color:#fff">ЖДЁТ ПОДТВЕРЖДЕНИЯ [ 1 шт. ]</div><div class="t" style="left:1269px;top:314px;width:85px;height:20px;line-height:20px;text-align:right;color:#1f8f1f">276,00</div><div class="t" style="left:1359px;top:314px;width:79px;height:20px;line-height:20px;text-align:right;">235,74</div><div class="t" style="left:1443px;top:314px;width:79px;height:20px;line-height:20px;text-align:right;">200,00</div><div class="t" style="left:1647px;top:314px;width:112px;height:20px;line-height:20px;">21.07.2024 14:53:06</div><div class="t" style="left:1764px;top:314px;width:130px;height:20px;line-height:20px;">Сервис</div><div class="t" style="left:1901px;top:314px;width:4px;height:20px;line-height:20px;">2</div><div style="left:223px;top:338px;width:14px;height:14px;border:1px solid #c6c6c6;background:#fff"></div><div class="t" style="left:250px;top:335px;width:100px;height:20px;line-height:20px;">Аптека 1</div><div class="t" style="left:358px;top:335px;width:80px;height:20px;line-height:20px;color:#fff">Не завершён</div><div class="t" style="left:444px;top:335px;width:62px;height:20px;line-height:20px;">21.07.2024</div><div class="t" style="left:512px;top:335px;width:95px;height:20px;line-height:20px;">МСК09971835</div><div class="t" style="left:613px;top:335px;width:114px;height:20px;line-height:20px;font-weight:bold">Пульс</div><div style="left:736px;top:338px;width:14px;height:14px;border:1px solid #c6c6c6;background:#fff"></div><svg style="left:736px;top:338px" width="14" height="14" viewBox="0 0 14 14"><path d="M2.7 7.4L5.4 10.2L11.7 3.5" stroke="#333" stroke-width="1.15" fill="none"/></svg><div class="t" style="left:761px;top:335px;width:94px;height:20px;line-height:20px;">1120174669</div><div class="t" style="left:857px;top:335px;width:79px;height:20px;line-height:20px;text-align:right;font-weight:bold;color:#9a32cd">8711,35</div><div class="t" style="left:941px;top:335px;width:73px;height:20px;line-height:20px;text-align:right;font-weight:bold;color:#9a32cd">820,92</div><div class="t" style="left:1019px;top:335px;width:85px;height:20px;line-height:20px;text-align:right;font-weight:bold;color:#0e7d0e">9187,00</div><div class="t" style="left:1112px;top:335px;width:153px;height:20px;line-height:20px;color:#fff">СКАНИРОВАТЬ [ 17 шт. ]</div><div class="t" style="left:1269px;top:335px;width:85px;height:20px;line-height:20px;text-align:right;color:#1f8f1f">9187,00</div><div class="t" style="left:1359px;top:335px;width:79px;height:20px;line-height:20px;text-align:right;">7890,43</div><div class="t" style="left:1443px;top:335px;width:79px;height:20px;line-height:20px;text-align:right;">222,14</div><div class="t" style="left:1647px;top:335px;width:112px;height:20px;line-height:20px;">21.07.2024 14:23:31</div><div class="t" style="left:1764px;top:335px;width:130px;height:20px;line-height:20px;">Сервис</div><div class="t" style="left:1901px;top:335px;width:4px;height:20px;line-height:20px;">1</div><div style="left:223px;top:359px;width:14px;height:14px;border:1px solid #c6c6c6;background:#fff"></div><div class="t" style="left:250px;top:356px;width:100px;height:20px;line-height:20px;">Аптека 7</div><div class="t" style="left:358px;top:356px;width:80px;height:20px;line-height:20px;">Актуален</div><div class="t" style="left:444px;top:356px;width:62px;height:20px;line-height:20px;">21.07.2024</div><div class="t" style="left:512px;top:356px;width:95px;height:20px;line-height:20px;">8673509-30</div><div class="t" style="left:613px;top:356px;width:114px;height:20px;line-height:20px;font-weight:bold">Катрен (Аптека.ру)</div><div style="left:736px;top:359px;width:14px;height:14px;border:1px solid #c6c6c6;background:#fff"></div><svg style="left:736px;top:359px" width="14" height="14" viewBox="0 0 14 14"><path d="M2.7 7.4L5.4 10.2L11.7 3.5" stroke="#333" stroke-width="1.15" fill="none"/></svg><div class="t" style="left:761px;top:356px;width:94px;height:20px;line-height:20px;">MA-186812150</div><div class="t" style="left:857px;top:356px;width:79px;height:20px;line-height:20px;text-align:right;font-weight:bold;color:#9a32cd">1214,59</div><div class="t" style="left:941px;top:356px;width:73px;height:20px;line-height:20px;text-align:right;font-weight:bold;color:#9a32cd">163,46</div><div class="t" style="left:1019px;top:356px;width:85px;height:20px;line-height:20px;text-align:right;font-weight:bold;color:#0e7d0e">1275,00</div><div class="t" style="left:1112px;top:356px;width:153px;height:20px;line-height:20px;color:#fff">ПОДТВЕРЖДЕНО [ 21.07.2024 ]</div><div class="t" style="left:1269px;top:356px;width:85px;height:20px;line-height:20px;text-align:right;color:#1f8f1f">1275,00</div><div class="t" style="left:1359px;top:356px;width:79px;height:20px;line-height:20px;text-align:right;">1051,13</div><div class="t" style="left:1443px;top:356px;width:79px;height:20px;line-height:20px;text-align:right;">857,86</div><div class="t" style="left:1530px;top:356px;width:112px;height:20px;line-height:20px;">21.07.2024 12:14:13</div><div class="t" style="left:1647px;top:356px;width:112px;height:20px;line-height:20px;">21.07.2024 06:23:21</div><div class="t" style="left:1764px;top:356px;width:130px;height:20px;line-height:20px;">Сервис</div><div class="t" style="left:1901px;top:356px;width:4px;height:20px;line-height:20px;">2</div><div style="left:223px;top:380px;width:14px;height:14px;border:1px solid #c6c6c6;background:#fff"></div><div class="t" style="left:250px;top:377px;width:100px;height:20px;line-height:20px;">Аптека 2</div><div class="t" style="left:358px;top:377px;width:80px;height:20px;line-height:20px;">Актуален</div><div class="t" style="left:444px;top:377px;width:62px;height:20px;line-height:20px;">20.07.2024</div><div class="t" style="left:512px;top:377px;width:95px;height:20px;line-height:20px;">8669598-30</div><div class="t" style="left:613px;top:377px;width:114px;height:20px;line-height:20px;font-weight:bold">Катрен (Аптека.ру)</div><div style="left:736px;top:380px;width:14px;height:14px;border:1px solid #c6c6c6;background:#fff"></div><svg style="left:736px;top:380px" width="14" height="14" viewBox="0 0 14 14"><path d="M2.7 7.4L5.4 10.2L11.7 3.5" stroke="#333" stroke-width="1.15" fill="none"/></svg><div class="t" style="left:761px;top:377px;width:94px;height:20px;line-height:20px;">AM-186883564</div><div class="t" style="left:857px;top:377px;width:79px;height:20px;line-height:20px;text-align:right;font-weight:bold;color:#9a32cd">2862,14</div><div class="t" style="left:941px;top:377px;width:73px;height:20px;line-height:20px;text-align:right;font-weight:bold;color:#9a32cd">260,20</div><div class="t" style="left:1019px;top:377px;width:85px;height:20px;line-height:20px;text-align:right;font-weight:bold;color:#0e7d0e">2970,00</div><div class="t" style="left:1112px;top:377px;width:153px;height:20px;line-height:20px;color:#fff">ПОДТВЕРЖДЕНО [ 21.07.2024 ]</div><div class="t" style="left:1269px;top:377px;width:85px;height:20px;line-height:20px;text-align:right;color:#1f8f1f">2970,00</div><div class="t" style="left:1359px;top:377px;width:79px;height:20px;line-height:20px;text-align:right;">2601,94</div><div class="t" style="left:1443px;top:377px;width:79px;height:20px;line-height:20px;text-align:right;">3770,75</div><div class="t" style="left:1530px;top:377px;width:112px;height:20px;line-height:20px;">21.07.2024 10:02:10</div><div class="t" style="left:1647px;top:377px;width:112px;height:20px;line-height:20px;">20.07.2024 23:23:08</div><div class="t" style="left:1764px;top:377px;width:130px;height:20px;line-height:20px;">Сервис</div><div class="t" style="left:1901px;top:377px;width:4px;height:20px;line-height:20px;">2</div><div style="left:223px;top:401px;width:14px;height:14px;border:1px solid #c6c6c6;background:#fff"></div><div class="t" style="left:250px;top:398px;width:100px;height:20px;line-height:20px;">Аптека 5</div><div class="t" style="left:358px;top:398px;width:80px;height:20px;line-height:20px;">Актуален</div><div class="t" style="left:444px;top:398px;width:62px;height:20px;line-height:20px;">20.07.2024</div><div class="t" style="left:512px;top:398px;width:95px;height:20px;line-height:20px;">8668353-30</div><div class="t" style="left:613px;top:398px;width:114px;height:20px;line-height:20px;font-weight:bold">Катрен (Аптека.ру)</div><div style="left:736px;top:401px;width:14px;height:14px;border:1px solid #c6c6c6;background:#fff"></div><svg style="left:736px;top:401px" width="14" height="14" viewBox="0 0 14 14"><path d="M2.7 7.4L5.4 10.2L11.7 3.5" stroke="#333" stroke-width="1.15" fill="none"/></svg><div class="t" style="left:761px;top:398px;width:94px;height:20px;line-height:20px;">AM-186904288</div><div class="t" style="left:857px;top:398px;width:79px;height:20px;line-height:20px;text-align:right;font-weight:bold;color:#9a32cd">727,02</div><div class="t" style="left:941px;top:398px;width:73px;height:20px;line-height:20px;text-align:right;font-weight:bold;color:#9a32cd">66,09</div><div class="t" style="left:1019px;top:398px;width:85px;height:20px;line-height:20px;text-align:right;font-weight:bold;color:#0e7d0e">759,00</div><div class="t" style="left:1112px;top:398px;width:153px;height:20px;line-height:20px;color:#fff">ПОДТВЕРЖДЕНО [ 21.07.2024 ]</div><div class="t" style="left:1269px;top:398px;width:85px;height:20px;line-height:20px;text-align:right;color:#1f8f1f">759,00</div><div class="t" style="left:1359px;top:398px;width:79px;height:20px;line-height:20px;text-align:right;">660,93</div><div class="t" style="left:1443px;top:398px;width:79px;height:20px;line-height:20px;text-align:right;">624,36</div><div class="t" style="left:1530px;top:398px;width:112px;height:20px;line-height:20px;">21.07.2024 14:11:17</div><div class="t" style="left:1647px;top:398px;width:112px;height:20px;line-height:20px;">20.07.2024 22:53:09</div><div class="t" style="left:1764px;top:398px;width:130px;height:20px;line-height:20px;">Сервис</div><div class="t" style="left:1901px;top:398px;width:4px;height:20px;line-height:20px;">2</div><div style="left:223px;top:422px;width:14px;height:14px;border:1px solid #c6c6c6;background:#fff"></div><div class="t" style="left:250px;top:419px;width:100px;height:20px;line-height:20px;">Аптека 5</div><div class="t" style="left:358px;top:419px;width:80px;height:20px;line-height:20px;">Актуален</div><div class="t" style="left:444px;top:419px;width:62px;height:20px;line-height:20px;">20.07.2024</div><div class="t" style="left:512px;top:419px;width:95px;height:20px;line-height:20px;">8660185-30</div><div class="t" style="left:613px;top:419px;width:114px;height:20px;line-height:20px;font-weight:bold">Катрен (Аптека.ру)</div><div style="left:736px;top:422px;width:14px;height:14px;border:1px solid #c6c6c6;background:#fff"></div><svg style="left:736px;top:422px" width="14" height="14" viewBox="0 0 14 14"><path d="M2.7 7.4L5.4 10.2L11.7 3.5" stroke="#333" stroke-width="1.15" fill="none"/></svg><div class="t" style="left:761px;top:419px;width:94px;height:20px;line-height:20px;">MI-186844498</div><div class="t" style="left:857px;top:419px;width:79px;height:20px;line-height:20px;text-align:right;font-weight:bold;color:#9a32cd">1717,14</div><div class="t" style="left:941px;top:419px;width:73px;height:20px;line-height:20px;text-align:right;font-weight:bold;color:#9a32cd">286,19</div><div class="t" style="left:1019px;top:419px;width:85px;height:20px;line-height:20px;text-align:right;font-weight:bold;color:#0e7d0e">1773,00</div><div class="t" style="left:1269px;top:419px;width:85px;height:20px;line-height:20px;text-align:right;color:#1f8f1f">1773,00</div><div class="t" style="left:1359px;top:419px;width:79px;height:20px;line-height:20px;text-align:right;">1430,95</div><div class="t" style="left:1443px;top:419px;width:79px;height:20px;line-height:20px;text-align:right;">1147,80</div><div class="t" style="left:1530px;top:419px;width:112px;height:20px;line-height:20px;">21.07.2024 14:11:31</div><div class="t" style="left:1647px;top:419px;width:112px;height:20px;line-height:20px;">20.07.2024 19:53:07</div><div class="t" style="left:1764px;top:419px;width:130px;height:20px;line-height:20px;">Сервис</div><div class="t" style="left:1901px;top:419px;width:4px;height:20px;line-height:20px;">2</div><div style="left:223px;top:443px;width:14px;height:14px;border:1px solid #c6c6c6;background:#fff"></div><div class="t" style="left:250px;top:440px;width:100px;height:20px;line-height:20px;">Аптека 1</div><div class="t" style="left:358px;top:440px;width:80px;height:20px;line-height:20px;">Актуален</div><div class="t" style="left:444px;top:440px;width:62px;height:20px;line-height:20px;">20.07.2024</div><div class="t" style="left:512px;top:440px;width:95px;height:20px;line-height:20px;">8659090-30</div><div class="t" style="left:613px;top:440px;width:114px;height:20px;line-height:20px;font-weight:bold">Катрен (Аптека.ру)</div><div style="left:736px;top:443px;width:14px;height:14px;border:1px solid #c6c6c6;background:#fff"></div><svg style="left:736px;top:443px" width="14" height="14" viewBox="0 0 14 14"><path d="M2.7 7.4L5.4 10.2L11.7 3.5" stroke="#333" stroke-width="1.15" fill="none"/></svg><div class="t" style="left:761px;top:440px;width:94px;height:20px;line-height:20px;">MI-186850824</div><div class="t" style="left:857px;top:440px;width:79px;height:20px;line-height:20px;text-align:right;font-weight:bold;color:#9a32cd">122,97</div><div class="t" style="left:941px;top:440px;width:73px;height:20px;line-height:20px;text-align:right;font-weight:bold;color:#9a32cd">11,18</div><div class="t" style="left:1019px;top:440px;width:85px;height:20px;line-height:20px;text-align:right;font-weight:bold;color:#0e7d0e">133,00</div><div class="t" style="left:1112px;top:440px;width:153px;height:20px;line-height:20px;color:#fff">ПОДТВЕРЖДЕНО [ 21.07.2024 ]</div><div class="t" style="left:1269px;top:440px;width:85px;height:20px;line-height:20px;text-align:right;color:#1f8f1f">133,00</div><div class="t" style="left:1359px;top:440px;width:79px;height:20px;line-height:20px;text-align:right;">111,79</div><div class="t" style="left:1443px;top:440px;width:79px;height:20px;line-height:20px;text-align:right;">95,86</div><div class="t" style="left:1530px;top:440px;width:112px;height:20px;line-height:20px;">21.07.2024 11:36:45</div><div class="t" style="left:1647px;top:440px;width:112px;height:20px;line-height:20px;">20.07.2024 19:53:07</div><div class="t" style="left:1764px;top:440px;width:130px;height:20px;line-height:20px;">Сервис</div><div class="t" style="left:1901px;top:440px;width:4px;height:20px;line-height:20px;">1</div><div style="left:223px;top:464px;width:14px;height:14px;border:1px solid #c6c6c6;background:#fff"></div><div class="t" style="left:250px;top:461px;width:100px;height:20px;line-height:20px;">Аптека 2</div><div class="t" style="left:358px;top:461px;width:80px;height:20px;line-height:20px;">Актуален</div><div class="t" style="left:444px;top:461px;width:62px;height:20px;line-height:20px;">20.07.2024</div><div class="t" style="left:512px;top:461px;width:95px;height:20px;line-height:20px;">8656139-30</div><div class="t" style="left:613px;top:461px;width:114px;height:20px;line-height:20px;font-weight:bold">Катрен (Аптека.ру)</div><div style="left:736px;top:464px;width:14px;height:14px;border:1px solid #c6c6c6;background:#fff"></div><svg style="left:736px;top:464px" width="14" height="14" viewBox="0 0 14 14"><path d="M2.7 7.4L5.4 10.2L11.7 3.5" stroke="#333" stroke-width="1.15" fill="none"/></svg><div class="t" style="left:761px;top:461px;width:94px;height:20px;line-height:20px;">MA-186830570</div><div class="t" style="left:857px;top:461px;width:79px;height:20px;line-height:20px;text-align:right;font-weight:bold;color:#9a32cd">156,00</div><div class="t" style="left:941px;top:461px;width:73px;height:20px;line-height:20px;text-align:right;font-weight:bold;color:#9a32cd">26,00</div><div class="t" style="left:1019px;top:461px;width:85px;height:20px;line-height:20px;text-align:right;font-weight:bold;color:#0e7d0e">170,00</div><div class="t" style="left:1269px;top:461px;width:85px;height:20px;line-height:20px;text-align:right;color:#1f8f1f">170,00</div><div class="t" style="left:1359px;top:461px;width:79px;height:20px;line-height:20px;text-align:right;">130,00</div><div class="t" style="left:1443px;top:461px;width:79px;height:20px;line-height:20px;text-align:right;">71,50</div><div class="t" style="left:1530px;top:461px;width:112px;height:20px;line-height:20px;">21.07.2024 10:02:34</div><div class="t" style="left:1647px;top:461px;width:112px;height:20px;line-height:20px;">20.07.2024 18:23:17</div><div class="t" style="left:1764px;top:461px;width:130px;height:20px;line-height:20px;">Сервис</div><div class="t" style="left:1901px;top:461px;width:4px;height:20px;line-height:20px;">2</div><svg style="left:204px;top:320px" width="7" height="10" viewBox="0 0 7 10"><path d="M1 0.4L5.6 4.9L1 9.4" stroke="#444" stroke-width="1.1" fill="none"/></svg><div class="t" style="left:857px;top:482px;width:79px;height:20px;line-height:20px;text-align:right;font-weight:bold">63646861,53</div><div class="t" style="left:941px;top:482px;width:73px;height:20px;line-height:20px;text-align:right;font-weight:bold">6279335,46</div><div class="t" style="left:1019px;top:482px;width:85px;height:20px;line-height:20px;text-align:right;font-weight:bold">82285246,29</div><div class="t" style="left:1269px;top:482px;width:85px;height:20px;line-height:20px;text-align:right;font-weight:bold">82273939,51</div><div class="t" style="left:1359px;top:482px;width:79px;height:20px;line-height:20px;text-align:right;font-weight:bold">57367619,59</div><div class="t" style="left:1443px;top:482px;width:79px;height:20px;line-height:20px;text-align:right;font-weight:bold">31207117,85</div><div style="left:1906px;top:125px;width:16px;height:356px;background:#f2f2f2"></div><svg style="left:1910px;top:130px" width="8" height="5" viewBox="0 0 8 5"><path d="M0.5 4.5L4 1L7.5 4.5" stroke="#555" stroke-width="1.1" fill="none"/></svg><div style="left:1906px;top:143px;width:15px;height:8px;background:#cdcdcd"></div><svg style="left:1910px;top:471px" width="8" height="5" viewBox="0 0 8 5"><path d="M0.5 0.5L4 4L7.5 0.5" stroke="#555" stroke-width="1.1" fill="none"/></svg><div style="left:247px;top:502px;width:1675px;height:16px;background:#f2f2f2"></div><div style="left:264px;top:503px;width:1370px;height:15px;background:#cdcdcd"></div><svg style="left:252px;top:506px" width="5" height="9" viewBox="0 0 5 9"><path d="M4.5 0.5L0.8 4.5L4.5 8.5" stroke="#444" stroke-width="1.1" fill="none"/></svg><svg style="left:1911px;top:506px" width="5" height="9" viewBox="0 0 5 9"><path d="M0.5 0.5L4.2 4.5L0.5 8.5" stroke="#444" stroke-width="1.1" fill="none"/></svg><div style="left:200px;top:502px;width:44px;height:16px;background:#fff"></div><div style="left:244px;top:502px;width:1px;height:16px;background:#d9d9d9"></div><div style="left:246px;top:502px;width:1px;height:16px;background:#d9d9d9"></div><div style="left:200px;top:518px;width:1722px;height:23px;background:#fff"></div><div style="left:200px;top:541px;width:1722px;height:1px;background:#d0d0d0"></div><div class="t" style="left:203px;top:524px;height:15px;line-height:15px;font-size:11.5px">28 : 7234</div><div class="t" style="left:1500px;top:524px;width:415px;height:15px;line-height:15px;text-align:right;font-size:11.5px">Поставка с 01.01.2024 по 31.12.2025</div><div style="left:200px;top:569px;width:1722px;height:435px;background:#fff"></div><div style="left:216px;top:589px;width:1706px;height:20px;background:#e4fcc1"></div><div style="left:200px;top:588px;width:1722px;height:1px;background:#d9d9d9"></div><div style="left:200px;top:609px;width:1722px;height:1px;background:#d9d9d9"></div><div style="left:200px;top:630px;width:1722px;height:1px;background:#d9d9d9"></div><div style="left:246px;top:569px;width:1px;height:41px;background:#d9d9d9"></div><div style="left:294px;top:569px;width:1px;height:41px;background:#d9d9d9"></div><div style="left:831px;top:569px;width:1px;height:41px;background:#d9d9d9"></div><div style="left:858px;top:569px;width:1px;height:41px;background:#d9d9d9"></div><div style="left:909px;top:569px;width:1px;height:41px;background:#d9d9d9"></div><div style="left:960px;top:569px;width:1px;height:41px;background:#d9d9d9"></div><div style="left:1030px;top:569px;width:1px;height:41px;background:#d9d9d9"></div><div style="left:1095px;top:569px;width:1px;height:41px;background:#d9d9d9"></div><div style="left:1160px;top:569px;width:1px;height:41px;background:#d9d9d9"></div><div style="left:1238px;top:569px;width:1px;height:41px;background:#d9d9d9"></div><div style="left:1302px;top:569px;width:1px;height:41px;background:#d9d9d9"></div><div style="left:1367px;top:569px;width:1px;height:41px;background:#d9d9d9"></div><div style="left:1487px;top:569px;width:1px;height:41px;background:#d9d9d9"></div><div style="left:1512px;top:569px;width:1px;height:41px;background:#d9d9d9"></div><div style="left:1577px;top:569px;width:1px;height:41px;background:#d9d9d9"></div><div style="left:1653px;top:569px;width:1px;height:41px;background:#d9d9d9"></div><div style="left:1740px;top:569px;width:1px;height:41px;background:#d9d9d9"></div><div style="left:1815px;top:569px;width:1px;height:41px;background:#d9d9d9"></div><div style="left:1889px;top:569px;width:1px;height:41px;background:#d9d9d9"></div><div style="left:215px;top:569px;width:1px;height:62px;background:#d9d9d9"></div><div style="left:244px;top:569px;width:1px;height:41px;background:#d9d9d9"></div><div style="left:216px;top:610px;width:1706px;height:20px;background:#d6d6d6"></div><div style="left:295px;top:610px;width:536px;height:20px;background:#6ccdf0"></div><div style="left:859px;top:610px;width:50px;height:20px;background:#ff8c00"></div><div style="left:1096px;top:610px;width:64px;height:20px;background:#f2f2f2"></div><div style="left:222px;top:572px;width:14px;height:14px;border:1px solid #c6c6c6;background:#fff"></div><svg style="left:222px;top:572px" width="14" height="14" viewBox="0 0 14 14"><path d="M2.7 7.4L5.4 10.2L11.7 3.5" stroke="#333" stroke-width="1.15" fill="none"/></svg><div class="t" style="left:251px;top:570px;width:39px;height:17px;line-height:17px;color:#333">№ п/п</div><div style="left:253px;top:598px;width:9px;height:3px;border-top:1px solid #5c5c5c;border-bottom:1px solid #5c5c5c"></div><div class="t" style="left:299px;top:570px;width:528px;height:17px;line-height:17px;color:#333">Наименование</div><svg style="left:297px;top:593px" width="17" height="11" viewBox="0 0 17 11"><path d="M1.5 8V4.3Q1.5 3.2 2.5 3.2Q3.5 3.2 3.5 4.3V8M1.5 5.8H3.5" stroke="#5a5a5a" stroke-width="1" fill="none"/><rect x="5" y="0" width="7" height="11" rx="1.5" fill="#007800"/><rect x="7" y="3" width="3" height="5" fill="#fbfff5"/><rect x="8" y="4" width="1" height="1" fill="#007800"/><rect x="8" y="6" width="1" height="1" fill="#007800"/><path d="M15.8 3.5H13.5V7.5H15.8" stroke="#5a5a5a" stroke-width="1" fill="none"/></svg><div class="t" style="left:836px;top:570px;width:18px;height:17px;line-height:17px;color:#333">Маркировка</div><div style="left:838px;top:591px;width:14px;height:14px;border:1px solid #c6c6c6;background:#fff"></div><div style="left:841px;top:594px;width:8px;height:8px;background:#333"></div><div class="t" style="left:863px;top:570px;width:42px;height:17px;line-height:17px;color:#333">Кол-во</div><div style="left:865px;top:598px;width:9px;height:3px;border-top:1px solid #5c5c5c;border-bottom:1px solid #5c5c5c"></div><div class="t" style="left:914px;top:570px;width:42px;height:17px;line-height:17px;color:#333">Марк. кол-во</div><div style="left:916px;top:598px;width:9px;height:3px;border-top:1px solid #5c5c5c;border-bottom:1px solid #5c5c5c"></div><div class="t" style="left:965px;top:570px;width:61px;height:17px;line-height:17px;color:#333">Цена розн.</div><div style="left:967px;top:598px;width:9px;height:3px;border-top:1px solid #5c5c5c;border-bottom:1px solid #5c5c5c"></div><div class="t" style="left:1035px;top:570px;width:56px;height:17px;line-height:17px;color:#333">Розн. наценка</div><div style="left:1037px;top:598px;width:9px;height:3px;border-top:1px solid #5c5c5c;border-bottom:1px solid #5c5c5c"></div><div class="t" style="left:1100px;top:570px;width:56px;height:17px;line-height:17px;color:#333">Предыдущая</div><div style="left:1102px;top:598px;width:9px;height:3px;border-top:1px solid #5c5c5c;border-bottom:1px solid #5c5c5c"></div><div class="t" style="left:1165px;top:570px;width:69px;height:17px;line-height:17px;color:#333">Сумма розн.</div><div style="left:1167px;top:598px;width:9px;height:3px;border-top:1px solid #5c5c5c;border-bottom:1px solid #5c5c5c"></div><div class="t" style="left:1243px;top:570px;width:55px;height:17px;line-height:17px;color:#333">Цена опт.</div><div style="left:1245px;top:598px;width:9px;height:3px;border-top:1px solid #5c5c5c;border-bottom:1px solid #5c5c5c"></div><div class="t" style="left:1307px;top:570px;width:56px;height:17px;line-height:17px;color:#333">Сумма опт.</div><div style="left:1309px;top:598px;width:9px;height:3px;border-top:1px solid #5c5c5c;border-bottom:1px solid #5c5c5c"></div><div class="t" style="left:1372px;top:570px;width:111px;height:17px;line-height:17px;color:#333">Классификация</div><div class="t" style="left:1492px;top:570px;width:16px;height:17px;line-height:17px;color:#333">Ставка</div><div style="left:1494px;top:598px;width:9px;height:3px;border-top:1px solid #5c5c5c;border-bottom:1px solid #5c5c5c"></div><div class="t" style="left:1517px;top:570px;width:56px;height:17px;line-height:17px;color:#333">НДС</div><div style="left:1519px;top:598px;width:9px;height:3px;border-top:1px solid #5c5c5c;border-bottom:1px solid #5c5c5c"></div><div class="t" style="left:1582px;top:570px;width:67px;height:17px;line-height:17px;color:#333">Сумма НДС</div><div style="left:1584px;top:598px;width:9px;height:3px;border-top:1px solid #5c5c5c;border-bottom:1px solid #5c5c5c"></div><div class="t" style="left:1658px;top:570px;width:78px;height:17px;line-height:17px;color:#333">Ограничение</div><div style="left:1660px;top:598px;width:9px;height:3px;border-top:1px solid #5c5c5c;border-bottom:1px solid #5c5c5c"></div><div class="t" style="left:1745px;top:570px;width:66px;height:17px;line-height:17px;color:#333">Срок годности</div><div style="left:1747px;top:598px;width:9px;height:3px;border-top:1px solid #5c5c5c;border-bottom:1px solid #5c5c5c"></div><div class="t" style="left:1820px;top:570px;width:65px;height:17px;line-height:17px;color:#333">Серия</div><svg style="left:1818px;top:593px" width="17" height="11" viewBox="0 0 17 11"><path d="M1.5 8V4.3Q1.5 3.2 2.5 3.2Q3.5 3.2 3.5 4.3V8M1.5 5.8H3.5" stroke="#5a5a5a" stroke-width="1" fill="none"/><rect x="5" y="0" width="7" height="11" rx="1.5" fill="#007800"/><rect x="7" y="3" width="3" height="5" fill="#fbfff5"/><rect x="8" y="4" width="1" height="1" fill="#007800"/><rect x="8" y="6" width="1" height="1" fill="#007800"/><path d="M15.8 3.5H13.5V7.5H15.8" stroke="#5a5a5a" stroke-width="1" fill="none"/></svg><div class="t" style="left:1894px;top:570px;width:30px;height:17px;line-height:17px;color:#333">МНН</div><svg style="left:1892px;top:593px" width="17" height="11" viewBox="0 0 17 11"><path d="M1.5 8V4.3Q1.5 3.2 2.5 3.2Q3.5 3.2 3.5 4.3V8M1.5 5.8H3.5" stroke="#5a5a5a" stroke-width="1" fill="none"/><rect x="5" y="0" width="7" height="11" rx="1.5" fill="#007800"/><rect x="7" y="3" width="3" height="5" fill="#fbfff5"/><rect x="8" y="4" width="1" height="1" fill="#007800"/><rect x="8" y="6" width="1" height="1" fill="#007800"/><path d="M15.8 3.5H13.5V7.5H15.8" stroke="#5a5a5a" stroke-width="1" fill="none"/></svg><svg style="left:204px;top:594px" width="9" height="10" viewBox="0 0 9 10"><path d="M0.5 1.5Q0.5 0.3 4.5 0.3Q8.5 0.3 8.5 1.5L5.2 4.6V9.5H3.8V4.6Z" fill="#333"/><ellipse cx="4.5" cy="1.5" rx="3" ry="0.8" fill="#fff"/></svg><div style="left:223px;top:613px;width:14px;height:14px;border:1px solid #c6c6c6;background:#fff"></div><svg style="left:223px;top:613px" width="14" height="14" viewBox="0 0 14 14"><path d="M2.7 7.4L5.4 10.2L11.7 3.5" stroke="#333" stroke-width="1.15" fill="none"/></svg><div class="t" style="left:247px;top:610px;width:42px;height:20px;line-height:20px;text-align:right;">1</div><div class="t" style="left:298px;top:610px;width:530px;height:20px;line-height:20px;">Драмина табл. 50мг бл. N10 Jadran Galenski Lab.</div><div style="left:837px;top:613px;width:14px;height:14px;border:1px solid #c6c6c6;background:#fff"></div><svg style="left:837px;top:613px" width="14" height="14" viewBox="0 0 14 14"><path d="M2.7 7.4L5.4 10.2L11.7 3.5" stroke="#333" stroke-width="1.15" fill="none"/></svg><div class="t" style="left:859px;top:610px;width:45px;height:20px;line-height:20px;text-align:right;font-weight:bold;color:#fff">1</div><div class="t" style="left:910px;top:610px;width:45px;height:20px;line-height:20px;text-align:right;">1</div><div class="t" style="left:961px;top:610px;width:64px;height:20px;line-height:20px;text-align:right;font-weight:bold;color:#0e7d0e">276,00</div><div class="t" style="left:1031px;top:610px;width:59px;height:20px;line-height:20px;text-align:right;font-weight:bold;color:#0e7d0e">6,44</div><div class="t" style="left:1096px;top:610px;width:59px;height:20px;line-height:20px;text-align:right;">299,00</div><div class="t" style="left:1161px;top:610px;width:72px;height:20px;line-height:20px;text-align:right;font-weight:bold;color:#0e7d0e">276,00</div><div class="t" style="left:1239px;top:610px;width:58px;height:20px;line-height:20px;text-align:right;color:#1e88e5">259,31</div><div class="t" style="left:1303px;top:610px;width:59px;height:20px;line-height:20px;text-align:right;color:#1e88e5">259,31</div><div class="t" style="left:1488px;top:610px;width:19px;height:20px;line-height:20px;text-align:right;font-weight:bold;color:#8b0000">10</div><div class="t" style="left:1513px;top:610px;width:59px;height:20px;line-height:20px;text-align:right;color:#1e88e5">23,57</div><div class="t" style="left:1578px;top:610px;width:70px;height:20px;line-height:20px;text-align:right;color:#1e88e5">23,57</div><div class="t" style="left:1657px;top:610px;width:82px;height:20px;line-height:20px;font-weight:bold;color:#0000cd">Отсутствует</div><div class="t" style="left:1744px;top:610px;width:70px;height:20px;line-height:20px;font-weight:bold;color:#222">31.05.2029</div><div class="t" style="left:1819px;top:610px;width:68px;height:20px;line-height:20px;">12614</div><div class="t" style="left:1893px;top:610px;width:29px;height:20px;line-height:20px;">димен</div><div style="left:247px;top:987px;width:1675px;height:17px;background:#f2f2f2"></div><div style="left:264px;top:988px;width:1255px;height:15px;background:#cdcdcd"></div><div style="left:200px;top:987px;width:44px;height:1px;background:#d9d9d9"></div><div style="left:244px;top:987px;width:1px;height:17px;background:#d9d9d9"></div><div style="left:246px;top:987px;width:1px;height:17px;background:#d9d9d9"></div><div style="left:200px;top:1004px;width:1722px;height:22px;background:#fff"></div><div class="t" style="left:203px;top:1009px;height:15px;line-height:15px;font-size:11.5px">1 : 1</div><div class="t" style="left:1700px;top:1009px;width:215px;height:15px;line-height:15px;text-align:right;font-size:11.5px">Строки</div><svg style="left:0;top:0" width="1928" height="1040" viewBox="0 0 1928 1040"><path d="M241 18 L246.8 23.8 M246.8 18 L241 23.8" fill="none" stroke="#333" stroke-width="1.7" /><path d="M475 18 L480.8 23.8 M480.8 18 L475 23.8" fill="none" stroke="#333" stroke-width="1.7" /><path d="M25.8 22 L32.4 15.4 L39 22" fill="none" stroke="#333" stroke-width="1.9" stroke-linejoin="miter"/><path d="M35.6 15 H37.4 V19.2 L35.6 17.4 Z" fill="#333" /><path d="M28 20.4 V27.6 H37 V20.4" fill="none" stroke="#333" stroke-width="1.6" /><rect x="33.1" y="22.8" width="2.5" height="4.8" fill="#333" /><circle cx="30.2" cy="23.8" r="0.9" fill="#333" /><rect x="173" y="16" width="1.4" height="10.8" fill="#0a72d8" /><rect x="169" y="26.4" width="5.6" height="1.6" fill="#0a72d8" /><rect x="169" y="22.6" width="3.3" height="3.6" fill="#0a72d8" /><circle cx="169.8" cy="21.2" r="0.7" fill="#0a72d8" /><circle cx="171.6" cy="21.2" r="0.7" fill="#0a72d8" /><rect x="169.6" y="19.2" width="2.4" height="1.2" fill="#0a72d8" /><path d="M176 23.4 L178.6 16.8 H183.2 Q183.8 16.8 183.8 17.4 V23" fill="none" stroke="#0a72d8" stroke-width="1.4" /><rect x="175.6" y="22.2" width="8.8" height="2.8" fill="#0a72d8" /><circle cx="177.2" cy="26.5" r="1.75" fill="#0a72d8" /><circle cx="182.4" cy="26.5" r="1.75" fill="#0a72d8" /><path d="M277 16.6 H272.4 Q270.6 16.6 270.6 19 V23.4 Q270.6 25.8 272.6 25.8 H281.8" fill="none" stroke="#333" stroke-width="1.1" /><path d="M283.6 16.6 H277.6 Q275.6 16.6 275.6 19.4 V23.2 Q275.6 25.8 277.6 25.8 M282.6 17.4 Q284 18 284.4 19.6" fill="none" stroke="#333" stroke-width="1.1" /><rect x="278.4" y="19.6" width="6" height="4.2" fill="none" stroke="#333" stroke-width="1.1"/><path d="M279.6 20.6 Q281.4 22.6 283.2 20.6" fill="none" stroke="#333" stroke-width="0.9" /><rect x="1728.6" y="8.6" width="14" height="9.4" fill="none" stroke="#333" stroke-width="1.1" rx="0.6"/><path d="M1734.6 18.2 V22.6 M1731.6 22.6 H1737.6" fill="none" stroke="#333" stroke-width="1.0" /><path d="M1726.2 23.4 H1744.2" fill="none" stroke="#333" stroke-width="0.8" stroke-dasharray="0.9 1.2"/><circle cx="1762" cy="16" r="8.8" fill="none" stroke="#333" stroke-width="1.1"/><rect x="1761.4" y="14" width="1.3" height="6" fill="#333" /><circle cx="1762" cy="11.6" r="0.8" fill="#333" /><rect x="1760.4" y="14" width="2" height="0.9" fill="#333" /><rect x="1760.4" y="19.4" width="3.4" height="0.9" fill="#333" /><path d="M1778 14.8 L1782 18.8 L1786 14.8" fill="none" stroke="#333" stroke-width="1.1" /><rect x="1808.2" y="16" width="10" height="1.1" fill="#333" /><rect x="1854.4" y="13.2" width="8.4" height="8.4" fill="none" stroke="#333" stroke-width="1.1"/><path d="M1856.6 13 V11.4 H1864.6 V19.4 H1862.8" fill="none" stroke="#333" stroke-width="1.1" /><path d="M1900 11 L1910 21 M1910 11 L1900 21" fill="none" stroke="#333" stroke-width="1.1" /><circle cx="25.8" cy="44.9" r="4.15" fill="none" stroke="#555" stroke-width="2.3"/><rect x="24.55" y="37.9" width="2.5" height="3" rx="0.7" fill="#555" transform="rotate(0 25.8 44.9)"/><rect x="24.55" y="37.9" width="2.5" height="3" rx="0.7" fill="#555" transform="rotate(45 25.8 44.9)"/><rect x="24.55" y="37.9" width="2.5" height="3" rx="0.7" fill="#555" transform="rotate(90 25.8 44.9)"/><rect x="24.55" y="37.9" width="2.5" height="3" rx="0.7" fill="#555" transform="rotate(135 25.8 44.9)"/><rect x="24.55" y="37.9" width="2.5" height="3" rx="0.7" fill="#555" transform="rotate(180 25.8 44.9)"/><rect x="24.55" y="37.9" width="2.5" height="3" rx="0.7" fill="#555" transform="rotate(225 25.8 44.9)"/><rect x="24.55" y="37.9" width="2.5" height="3" rx="0.7" fill="#555" transform="rotate(270 25.8 44.9)"/><rect x="24.55" y="37.9" width="2.5" height="3" rx="0.7" fill="#555" transform="rotate(315 25.8 44.9)"/><path d="M112.4 49 Q109.2 48.6 109.2 45.4 Q109.2 42.4 112.4 42.2 Q113.6 38.2 117 38.4 Q120.6 38.6 121.2 42.2 Q123.2 43 123 45.6 Q122.6 48.6 119.6 49" fill="none" stroke="#555" stroke-width="0.9" /><path d="M117.8 43.4 Q115.2 42.6 114.4 45.2 Q114.4 47.8 117 48.2 Q119 48.2 119.6 46" fill="none" stroke="#555" stroke-width="0.9" /><path d="M116.6 41.6 L117.8 43.4 L116 44.6" fill="none" stroke="#555" stroke-width="0.9" /><path d="M117 48.2 L116.4 51.6" fill="none" stroke="#555" stroke-width="0.9" /><rect x="185.1" y="64" width="4.9" height="5" fill="#6e6e6e" /><rect x="185.8" y="64.9" width="1.1" height="3.4" fill="#fff" /><rect x="187.4" y="64.9" width="0.5" height="3.4" fill="#9a9a9a" /><rect x="184" y="69" width="7" height="1" fill="#6e6e6e" /><rect x="187.1" y="70" width="0.9" height="2.2" fill="#6e6e6e" /><path d="M22 89.6 H23.6 L26 97.6 H34.6 L35.6 91.4 H25" fill="none" stroke="#333" stroke-width="1.0" /><circle cx="27" cy="100" r="1.1" fill="none" stroke="#333" stroke-width="1"/><circle cx="32.4" cy="100" r="1.1" fill="none" stroke="#333" stroke-width="1"/><path d="M179.2 97.4 L183.2 93.4 L187.2 97.4" fill="none" stroke="#555" stroke-width="1.1" /><path d="M46.1 116.3 L39.6 122.1 L43.7 126.2" fill="none" stroke="#333" stroke-width="1.4" /><path d="M47 116.5 H52.6 V120.6 L47.4 126.1 L44 122.4 Z" fill="none" stroke="#333" stroke-width="1.4" stroke-linejoin="round"/><circle cx="50.5" cy="119" r="0.8" fill="#333" /><path d="M39.9 143.7 L46.1 137.4 H52.4 V143.7 L46.1 149.9 Z" fill="none" stroke="#333" stroke-width="1.5" /><circle cx="48.9" cy="140.9" r="1.0" fill="#333" /><path d="M40 160.2 V172.4 M52.5 160.2 V172.4" fill="none" stroke="#333" stroke-width="1.3" /><rect x="41.6" y="161.2" width="4.4" height="3.6" fill="#8a8a8a" /><rect x="41.6" y="166.8" width="4.4" height="3.4" fill="#8a8a8a" /><path d="M42.7 161.2 V164.8 M44.2 161.2 V164.8 M42.7 166.8 V170.2 M44.2 166.8 V170.2" fill="none" stroke="#fff" stroke-width="0.5" /><path d="M46 163 H52.5 M46 168.6 H52.5" fill="none" stroke="#333" stroke-width="1.2" /><rect x="49.6" y="167.2" width="1.8" height="3" fill="#333" /><path d="M30.8 189.4 V187.8 H22.8 V198.4 H30.8 V196.8" fill="none" stroke="#333" stroke-width="1.2" /><path d="M24.5 192.6 L28.5 189.4 V191.4 Q34 191.4 35.4 195.6 Q32.6 193.6 28.5 194 V196 Z" fill="#333" /><path d="M179.2 195.4 L183.2 191.4 L187.2 195.4" fill="none" stroke="#555" stroke-width="1.1" /><path d="M40.1 216.3 L43.2 214.20000000000002 L46.300000000000004 216.3 L43.2 218.4 Z M47.199999999999996 216.3 L50.3 214.20000000000002 L53.4 216.3 L50.3 218.4 Z M40.5 220.9 L43.6 218.8 L46.7 220.9 L43.6 223.0 Z M46.8 220.9 L49.9 218.8 L53.0 220.9 L49.9 223.0 Z " fill="#333" /><path d="M43.4 223.2 L46.8 225.2 L50.2 223.2 L50.2 224.4 L46.8 226.4 L43.4 224.4 Z" fill="#333" /><path d="M46 235 V244 M42 240.2 L46 244.2 L50 240.2 M40 244.5 V247.6 H52 V244.5" fill="none" stroke="#333" stroke-width="1.6" /><path d="M46 257.5 L52 260.5 V267 L46 270 L40 267 V260.5 Z M40 260.5 L46 263.5 L52 260.5 M46 263.5 V270" fill="none" stroke="#333" stroke-width="1.1" /><path d="M44 282 V279.6 H51 V292.4 H44 V289" fill="none" stroke="#333" stroke-width="1.1" /><path d="M40 286 H48 M46 284 L48 286 L46 288" fill="none" stroke="#333" stroke-width="1.1" /><path d="M28 308 H23 V318 H33 V315" fill="none" stroke="#333" stroke-width="1.3" /><path d="M36 311.6 L32 308.2 V310.2 Q26.4 310.4 25.6 316 Q28 312.8 32 313.4 V315.2 Z" fill="#333" /><path d="M179.2 315.4 L183.2 311.4 L187.2 315.4" fill="none" stroke="#555" stroke-width="1.1" /><path d="M40 339 L49 334 L52.5 338 L43.5 343 Z" fill="#333" /><path d="M40 341 L43.5 345 L52.5 340 M40 343 L43.5 346.6 L52.5 341.8" fill="none" stroke="#555" stroke-width="1.0" /><circle cx="46.2" cy="338.5" r="1.6" fill="#fff" /><rect x="39.5" y="359.5" width="9" height="5" fill="#333" /><path d="M49 360.5 H51.5 L53 362.5 V364.5 H49 Z" fill="#333" /><circle cx="42" cy="365" r="1.1" fill="#333" /><circle cx="50.5" cy="365" r="1.1" fill="#333" /><path d="M46 390 V380 M42 383.8 L46 379.8 L50 383.8 M40 386.5 V389.6 H52 V386.5" fill="none" stroke="#333" stroke-width="1.6" /><path d="M39.5 404 Q41 402 43.5 403 L45 405.5 L42.5 408 Q40 407 39.5 404 Z" fill="#333" /><path d="M52.5 404 Q51 402 48.5 403 L47 405.5 L49.5 408 Q52 407 52.5 404 Z" fill="#333" /><path d="M44 407 L48 411 M48 407 L44 411" fill="none" stroke="#999" stroke-width="0.8" /><path d="M48 424 V421.6 H41 V434.4 H48 V431" fill="none" stroke="#333" stroke-width="1.1" /><path d="M44 428 H52 M50 426 L52 428 L50 430" fill="none" stroke="#333" stroke-width="1.1" /><path d="M43 449 V447 Q43 443.8 46 443.8 Q49 443.8 49 447 V449" fill="none" stroke="#333" stroke-width="1.3" /><path d="M41 449.2 H51 V456.2 H41 Z" fill="none" stroke="#333" stroke-width="1.3" /><circle cx="46" cy="452.6" r="1.1" fill="#333" /><path d="M25 471.6 H34 Q35 471.6 35.4 473 L35.8 474.2 H23.2 L23.6 473 Q24 471.6 25 471.6 Z" fill="#7a7a7a" /><path d="M23 474.6 H36.2 V482 Q36.2 482.8 35.4 482.8 H23.8 Q23 482.8 23 482 Z" fill="#333" /><path d="M27 479.2 V477.6 H32.2 V479.2" fill="none" stroke="#fff" stroke-width="1.1" /><path d="M179.2 479.4 L183.2 475.4 L187.2 479.4" fill="none" stroke="#555" stroke-width="1.1" /><path d="M40 501 H51 M48 498 L51.5 501 L48 504 M52 506.6 H41 M44 503.6 L40.5 506.6 L44 509.6" fill="none" stroke="#333" stroke-width="1.8" /><path d="M39.5 522 H42 Q44 522 46 525.5 Q48 529 50 529 H51 M39.5 529 H42 Q44 529 46 525.5 Q48 522 50 522 H51" fill="none" stroke="#333" stroke-width="1.6" /><path d="M50 519.5 L53 522 L50 524.5 Z M50 526.5 L53 529 L50 531.5 Z" fill="#333" /><circle cx="46.2" cy="547.6" r="4.2" fill="#333" /><path d="M40 541.5 L52.5 554.2" fill="none" stroke="#333" stroke-width="1.5" /><path d="M44 546.5 L48 549" fill="none" stroke="#fff" stroke-width="1.0" /><path d="M45.5 576 H40 V563.6 H46.5 L49 566 V569" fill="none" stroke="#333" stroke-width="1.1" /><path d="M42 567 H46 M42 569.5 H46 M42 572 H44.5" fill="none" stroke="#333" stroke-width="1.0" /><path d="M45.5 570 H47 L48 574 H52 L52.8 571 H47.6" fill="none" stroke="#333" stroke-width="1.2" /><circle cx="48.5" cy="575.8" r="0.9" fill="#333" /><circle cx="51.5" cy="575.8" r="0.9" fill="#333" /><path d="M39.5 586.2 H41.5 L43.5 594.5 H51 L52.5 588.5 H42.2" fill="none" stroke="#333" stroke-width="1.2" /><circle cx="44.5" cy="597.2" r="1.1" fill="none" stroke="#333" stroke-width="1"/><circle cx="50" cy="597.2" r="1.1" fill="none" stroke="#333" stroke-width="1"/><path d="M46 608 V619.5 M42.5 619.8 H49.5 M40.5 610 H51.5 M42 610 L39.8 615 H44.2 Z M50 610 L47.8 615 H52.2 Z" fill="none" stroke="#333" stroke-width="1.0" /><path d="M39.5 632 H41.5 L43.5 639 H51 L52.5 634" fill="none" stroke="#333" stroke-width="1.4" /><path d="M45.5 630 L49 633.5 M49 630 L45.5 633.5" fill="none" stroke="#333" stroke-width="1.1" /><circle cx="44.5" cy="641.4" r="1.2" fill="#333" /><circle cx="50" cy="641.4" r="1.2" fill="#333" /><path d="M39.5 652 H50 V656 H46 Q43 657 43 660 H39.5 Z" fill="#333" /><circle cx="48.5" cy="660" r="4.2" fill="#fff" stroke="#333" stroke-width="1.3"/><path d="M48.5 657.8 V660.2 H50.2" fill="none" stroke="#333" stroke-width="1.0" /><rect x="185.1" y="710" width="4.9" height="5" fill="#6e6e6e" /><rect x="185.8" y="710.9" width="1.1" height="3.4" fill="#fff" /><rect x="187.4" y="710.9" width="0.5" height="3.4" fill="#9a9a9a" /><rect x="184" y="715" width="7" height="1" fill="#6e6e6e" /><rect x="187.1" y="716" width="0.9" height="2.2" fill="#6e6e6e" /><circle cx="24.4" cy="735.4" r="4.4" fill="none" stroke="#7a7a7a" stroke-width="1.2"/><path d="M27.6 738.6 L31 742" fill="none" stroke="#7a7a7a" stroke-width="1.4" /><path d="M20.4 756.4 L24 760 L27.6 756.4" fill="none" stroke="#555" stroke-width="1.0" /><path d="M39.9 757.7 L42.6 760.4 L48.6 754" fill="none" stroke="#333" stroke-width="1.1" /><path d="M40.4 776.4 L44 780 L47.6 776.4" fill="none" stroke="#555" stroke-width="1.0" /><path d="M59.9 777.7 L62.6 780.4 L68.6 774" fill="none" stroke="#333" stroke-width="1.1" /><path d="M79.9 797.7 L82.6 800.4 L88.6 794" fill="none" stroke="#333" stroke-width="1.1" /><path d="M79.9 817.7 L82.6 820.4 L88.6 814" fill="none" stroke="#333" stroke-width="1.1" /><path d="M79.9 837.7 L82.6 840.4 L88.6 834" fill="none" stroke="#333" stroke-width="1.1" /><path d="M79.9 857.7 L82.6 860.4 L88.6 854" fill="none" stroke="#333" stroke-width="1.1" /><path d="M40.4 876.4 L44 880 L47.6 876.4" fill="none" stroke="#555" stroke-width="1.0" /><path d="M59.9 877.7 L62.6 880.4 L68.6 874" fill="none" stroke="#333" stroke-width="1.1" /><path d="M79.9 897.7 L82.6 900.4 L88.6 894" fill="none" stroke="#333" stroke-width="1.1" /><path d="M79.9 917.7 L82.6 920.4 L88.6 914" fill="none" stroke="#333" stroke-width="1.1" /><path d="M79.9 937.7 L82.6 940.4 L88.6 934" fill="none" stroke="#333" stroke-width="1.1" /><path d="M205.4 616 L209.6 620.2 L205.4 624.4" fill="none" stroke="#444" stroke-width="1.1" /><path d="M1377.5 611.4 L1385.6 619.5 L1377.5 627.6 L1369.4 619.5 Z" fill="#00b800" stroke="#00b800" stroke-width="1" stroke-linejoin="round"/><rect x="1388.4" y="610" width="9.2" height="19" fill="#00bfff" stroke="#5a4a40" stroke-width="0.6"/><rect x="1389" y="616.1" width="8" height="7.7" fill="#000" /><path d="M256.4 991.5 L252.4 995.5 L256.4 999.5" fill="none" stroke="#444" stroke-width="1.1" /><path d="M1911 991.5 L1915 995.5 L1911 999.5" fill="none" stroke="#444" stroke-width="1.1" /><path d="M215.5 79 H209.6 Q207.6 79 207.6 77 V64.6 Q207.6 62.6 209.6 62.6 H215.5 L220.3 67.6 V72.8" fill="none" stroke="#5c5c5c" stroke-width="1.55" /><path d="M214.8 62.6 L220.3 68.2 H214.8 Z" fill="#5c5c5c" /><path d="M210.4 72 H217.4 M210.4 75.6 H214.4" fill="none" stroke="#5c5c5c" stroke-width="1.6" stroke-linecap="round"/><path d="M220.3 74 V80.6 M216.9 77.3 H223.7" fill="none" stroke="#5c5c5c" stroke-width="1.5" /><path d="M240.2 79 H235.6 Q233.6 79 233.6 77 V64.6 Q233.6 62.6 235.6 62.6 H241.5 L246.3 67.6 V69.8" fill="none" stroke="#5c5c5c" stroke-width="1.55" /><path d="M240.8 62.6 L246.3 68.2 H240.8 Z" fill="#5c5c5c" /><path d="M236.4 72 H243.4 M236.4 75.6 H240.4" fill="none" stroke="#5c5c5c" stroke-width="1.6" stroke-linecap="round"/><path d="M241.2 80.2 L247.2 74.2" fill="none" stroke="#5c5c5c" stroke-width="2.6" /><path d="M247.9 73.4 L249 72.3" fill="none" stroke="#5c5c5c" stroke-width="2.0" /><rect x="262" y="61.1" width="7.8" height="2.8" fill="#5c5c5c" /><rect x="257.1" y="63.6" width="17.6" height="2.3" fill="#5c5c5c" /><path d="M258.4 68.1 H273.4 V80.8 H258.4 Z M262 69.6 V79.1 H264.1 V69.6 Z M268 69.6 V79.1 H270.1 V69.6 Z" fill="#5c5c5c" fill-rule="evenodd"/><path d="M295.8 60.9 H289.2 Q287.4 60.9 287.4 62.7 V76.2 Q287.4 78 289.2 78 H298.6 Q300.4 78 300.4 76.2 V66" fill="none" stroke="#5c5c5c" stroke-width="1.5" /><path d="M295.3 60.9 L300.6 66.4 H295.3 Z" fill="#5c5c5c" /><path d="M290.6 70.2 H297 M290.6 73.7 H294.3" fill="none" stroke="#5c5c5c" stroke-width="1.5" stroke-linecap="round"/><path d="M283.8 64.2 V78.6 Q283.8 80.8 286 80.8 H299.2" fill="none" stroke="#5c5c5c" stroke-width="1.5" /><rect x="310" y="60" width="1" height="22" fill="#d2d2d2" /><rect x="316.5" y="58.5" width="51" height="25" fill="#cce8fb" stroke="#a3d3f9" stroke-width="1"/><rect x="341.5" y="58.5" width="1.2" height="25" fill="#a3d3f9" /><rect x="320.3" y="61.7" width="17.2" height="1.2" fill="#5c5c5c" /><path d="M321.3 65 H336.3 L330.9 71.6 V79.8 L327.8 78.3 V71.6 Z" fill="#5c5c5c" /><path d="M361.4 66 V63 H349.8 L355.6 71.3 L349.2 79.2 H361.6 V75.8" fill="none" stroke="#5c5c5c" stroke-width="2.0" stroke-linejoin="miter"/><circle cx="381.3" cy="64.2" r="2.4" fill="#5c5c5c" /><path d="M381.3 66 V73.2 M373.5 73.6 V70.6 H388.7 V73.6" fill="none" stroke="#5c5c5c" stroke-width="1.3" /><circle cx="373.3" cy="78" r="2.4" fill="#5c5c5c" /><circle cx="381.3" cy="78" r="2.4" fill="#5c5c5c" /><circle cx="388.6" cy="78" r="2.4" fill="#5c5c5c" /><rect x="398" y="62" width="15" height="3" fill="#5c5c5c" /><rect x="398" y="66.8" width="15" height="2.8" fill="#5c5c5c" /><rect x="398.5" y="71.3" width="14" height="3.6" fill="#fff" stroke="#6a6a6a" stroke-width="1"/><rect x="398" y="75.4" width="14" height="1.4" fill="#9a9a9a" /><rect x="398" y="77.2" width="14.5" height="3" fill="#5c5c5c" /><path d="M411.8 75.2 L415 78.8" fill="none" stroke="#5c5c5c" stroke-width="1.2" /><rect x="424" y="60" width="1" height="22" fill="#d2d2d2" /><path d="M433.9 62.2 H452 V79.7 H433.9 Z M435 65.8 V69.2 H439.7 V65.8 Z M440.8 65.8 V69.2 H445.1 V65.8 Z M446.4 65.8 V69.2 H451 V65.8 Z M435 70.3 V73.7 H439.7 V70.3 Z M440.8 70.3 V73.7 H445.1 V70.3 Z M446.4 70.3 V73.7 H451 V70.3 Z M435 74.8 V78.2 H439.7 V74.8 Z M440.8 74.8 V78.2 H445.1 V74.8 Z M446.4 74.8 V78.2 H451 V74.8 Z" fill="#5c5c5c" fill-rule="evenodd"/><path d="M459 63 H463.4 L466.2 67.8 L469.2 63 H473.2 L468.2 71 L473 79 H469 L466 74 L463 79 H458.2 L464 71 Z" fill="#5c5c5c" /><path d="M468.6 71.2 H475.2 V68.8 L480 72.7 L475.2 76.6 V73.5 H468.6 Z" fill="#5c5c5c" /><rect x="486" y="60" width="1" height="22" fill="#d2d2d2" /><path d="M504.6 65.6 H510.8 V62.8 L515.2 67.3 L510.8 71.6 V69.2 H504.6 Z" fill="#5c5c5c" /><path d="M507.8 73.4 H501.6 V70.6 L497.2 74.9 L501.6 79.2 V76.8 H507.8 Z" fill="#5c5c5c" /><path d="M523.5 70.3 L527.5 74.3 L531.5 70.3" fill="none" stroke="#666" stroke-width="1.1" /><path d="M543.4 62.4 H557.2 V70.2" fill="none" stroke="#5c5c5c" stroke-width="1.0" /><path d="M541.3 64.6 H555.2 V72.2" fill="none" stroke="#5c5c5c" stroke-width="1.0" /><rect x="539" y="66.5" width="14.8" height="10.6" fill="#5c5c5c" /><path d="M539.6 67 L546.4 73.7 L553.2 67" fill="none" stroke="#f3f4f6" stroke-width="1.4" /><circle cx="539.5" cy="76.8" r="3.7" fill="#5c5c5c" stroke="#f3f4f6" stroke-width="1"/><path d="M539.5 74.6 V79 M537.3 76.8 H541.7" fill="none" stroke="#fff" stroke-width="0.9" /><rect x="564" y="60" width="1" height="22" fill="#d2d2d2" /><rect x="574.5" y="62.1" width="4.4" height="4.4" fill="none" stroke="#5c5c5c" stroke-width="1.8"/><rect x="576.1" y="63.7" width="1.2" height="1.2" fill="#5c5c5c" /><rect x="585.5" y="62.1" width="4.4" height="4.4" fill="none" stroke="#5c5c5c" stroke-width="1.8"/><rect x="587.1" y="63.7" width="1.2" height="1.2" fill="#5c5c5c" /><rect x="574.5" y="75.5" width="4.4" height="4.4" fill="none" stroke="#5c5c5c" stroke-width="1.8"/><rect x="576.1" y="77.1" width="1.2" height="1.2" fill="#5c5c5c" /><rect x="580.6" y="61.2" width="2.4" height="4.2" fill="#888" /><rect x="573.6" y="69.5" width="4" height="1.5" fill="#888" /><rect x="589.5" y="69.8" width="2" height="3" fill="#888" /><rect x="581" y="78" width="4" height="1.8" fill="#888" /><circle cx="583.2" cy="71.6" r="3.2" fill="none" stroke="#5c5c5c" stroke-width="1.2"/><path d="M585.6 74 L590.6 79.4" fill="none" stroke="#5c5c5c" stroke-width="1.4" /><rect x="600.3" y="62.2" width="6.2" height="6.2" fill="none" stroke="#5c5c5c" stroke-width="2"/><rect x="602.7" y="64.6" width="1.4" height="1.4" fill="#5c5c5c" /><rect x="600.3" y="73.2" width="6.2" height="6.2" fill="none" stroke="#5c5c5c" stroke-width="2"/><rect x="602.7" y="75.6" width="1.4" height="1.4" fill="#5c5c5c" /><path d="M610.4 69.2 L617.2 62.2" fill="none" stroke="#5c5c5c" stroke-width="2.3" /><path d="M610.5 72 H618.6 V74 H613 V75.5 H618.6 V80.6 H613.8 V78.6 H616.6 V77.4 H610.5 Z M610.5 78.6 H612.4 V80.6 H610.5 Z" fill="#666" /><rect x="626" y="60" width="1" height="22" fill="#d2d2d2" /><g transform="translate(0.0,0)"><path d="M637.7 62 H652.2 V80.4 H637.7 Z" fill="none" stroke="#5c5c5c" stroke-width="1.6" /><rect x="640.5" y="64.2" width="9.4" height="3.4" fill="none" stroke="#5c5c5c" stroke-width="1.2"/><circle cx="641.3" cy="70.4" r="0.95" fill="#5c5c5c" /><circle cx="645.0" cy="70.4" r="0.95" fill="#5c5c5c" /><circle cx="648.7" cy="70.4" r="0.95" fill="#5c5c5c" /><circle cx="641.3" cy="73.8" r="0.95" fill="#5c5c5c" /><circle cx="645.0" cy="73.8" r="0.95" fill="#5c5c5c" /><circle cx="648.7" cy="73.8" r="0.95" fill="#5c5c5c" /><circle cx="641.3" cy="77.2" r="0.95" fill="#5c5c5c" /><circle cx="645.0" cy="77.2" r="0.95" fill="#5c5c5c" /><circle cx="648.7" cy="77.2" r="0.95" fill="#5c5c5c" /></g><path d="M667.6 66.2 V65 Q667.6 61.4 671 61.4 Q674.4 61.4 674.6 65.4" fill="none" stroke="#5c5c5c" stroke-width="1.6" /><path d="M671.6 79.4 H666.2 Q664.6 79.4 664.6 77.8 V70 Q664.6 68.4 666.2 68.4 H676 Q677.6 68.4 677.6 70 V71.8" fill="none" stroke="#5c5c5c" stroke-width="1.6" /><circle cx="671" cy="73.6" r="1.2" fill="#5c5c5c" /><path d="M677.4 74.2 V80.6 M674.2 77.4 H680.8" fill="none" stroke="#5c5c5c" stroke-width="1.5" /><path d="M688.3 70.2 L692.3 74.2 L696.3 70.2" fill="none" stroke="#666" stroke-width="1.1" /><rect x="706.6" y="63" width="11.4" height="2.6" fill="#5c5c5c" /><path d="M702 65.6 H704.6 V67.2 H719.4 V65.6 H722 V73.8 H719.4 V69.8 H704.6 V73.8 H702 Z" fill="#5c5c5c" /><rect x="706.2" y="72" width="11.6" height="6.8" fill="#5c5c5c" /><path d="M729.3 70.2 L733.3 74.2 L737.3 70.2" fill="none" stroke="#666" stroke-width="1.1" /><path d="M752 77.5 H743.9 V62.9 H758.5 V66.6 M743.9 66.1 H758.5" fill="none" stroke="#5c5c5c" stroke-width="1.2" /><path d="M747.6 60.9 V64.4 M754.7 60.9 V64.4" fill="none" stroke="#5c5c5c" stroke-width="1.2" /><circle cx="755.8" cy="72.4" r="3.6" fill="none" stroke="#5c5c5c" stroke-width="1.3"/><path d="M758.3 75.2 L762.2 80.4" fill="none" stroke="#5c5c5c" stroke-width="1.5" /><path d="M770.3 70.2 L774.3 74.2 L778.3 70.2" fill="none" stroke="#666" stroke-width="1.1" /><rect x="785" y="60" width="1" height="22" fill="#d2d2d2" /><g transform="translate(0,0)"><path d="M802 73.2 Q797 72.2 793.5 67.8 Q798.6 62 804.2 62 Q810 62 814.6 67.8 Q813.8 69.3 812 70.3" fill="none" stroke="#5c5c5c" stroke-width="1.3" /><circle cx="804.1" cy="67.6" r="2.5" fill="none" stroke="#5c5c5c" stroke-width="1.2"/><circle cx="808.7" cy="75.4" r="3.1" fill="none" stroke="#5c5c5c" stroke-width="1.3"/><rect x="807.95" y="70.3" width="1.5" height="1.8" fill="#5c5c5c" transform="rotate(0 808.7 75.4)"/><rect x="807.95" y="70.3" width="1.5" height="1.8" fill="#5c5c5c" transform="rotate(45 808.7 75.4)"/><rect x="807.95" y="70.3" width="1.5" height="1.8" fill="#5c5c5c" transform="rotate(90 808.7 75.4)"/><rect x="807.95" y="70.3" width="1.5" height="1.8" fill="#5c5c5c" transform="rotate(135 808.7 75.4)"/><rect x="807.95" y="70.3" width="1.5" height="1.8" fill="#5c5c5c" transform="rotate(180 808.7 75.4)"/><rect x="807.95" y="70.3" width="1.5" height="1.8" fill="#5c5c5c" transform="rotate(225 808.7 75.4)"/><rect x="807.95" y="70.3" width="1.5" height="1.8" fill="#5c5c5c" transform="rotate(270 808.7 75.4)"/><rect x="807.95" y="70.3" width="1.5" height="1.8" fill="#5c5c5c" transform="rotate(315 808.7 75.4)"/><circle cx="808.7" cy="75.4" r="0.55" fill="#5c5c5c" /><path d="M826.8 62.8 H839.6 V79.4 H826.8 Z" fill="none" stroke="#5c5c5c" stroke-width="1.3" /><path d="M829.6 70.4 H836.6" fill="none" stroke="#5c5c5c" stroke-width="1.6" /><path d="M826.6 64.4 L820.8 65.8 L822.6 80 L837.4 79.8" fill="none" stroke="#5c5c5c" stroke-width="1.2" /><path d="M826.6 66 L823 66.8 L824.4 79.6" fill="none" stroke="#5c5c5c" stroke-width="1.0" /><ellipse cx="855.5" cy="65.2" rx="8.6" ry="3.4" fill="none" stroke="#5c5c5c" stroke-width="1.3"/><path d="M846.9 65.2 V76.6 Q847.6 79.6 853 79.8 M864.1 65.2 V71.4" fill="none" stroke="#5c5c5c" stroke-width="1.3" /><path d="M846.9 69.6 Q848.8 73 855.5 73 Q862 73 864.1 69.6 M846.9 73.8 Q848.4 76.4 854 76.8" fill="none" stroke="#5c5c5c" stroke-width="1.1" /><path d="M857.4 75.6 Q858.6 72.4 861.4 72.4 Q864 72.4 865 75" fill="none" stroke="#5c5c5c" stroke-width="1.3" /><path d="M865.6 72.2 L865.6 76 L862 75.6 Z" fill="#5c5c5c" /><path d="M864.2 77.6 Q863 80.6 860.4 80.6 Q857.8 80.6 856.8 78" fill="none" stroke="#5c5c5c" stroke-width="1.3" /><path d="M856.2 80.8 L856.2 77 L859.8 77.4 Z" fill="#5c5c5c" /></g><g transform="translate(0,485)"><path d="M215.5 79 H209.6 Q207.6 79 207.6 77 V64.6 Q207.6 62.6 209.6 62.6 H215.5 L220.3 67.6 V72.8" fill="none" stroke="#5c5c5c" stroke-width="1.55" /><path d="M214.8 62.6 L220.3 68.2 H214.8 Z" fill="#5c5c5c" /><path d="M210.4 72 H217.4 M210.4 75.6 H214.4" fill="none" stroke="#5c5c5c" stroke-width="1.6" stroke-linecap="round"/><path d="M220.3 74 V80.6 M216.9 77.3 H223.7" fill="none" stroke="#5c5c5c" stroke-width="1.5" /></g><path d="M231.2 555.2 L235.2 559.2 L239.2 555.2" fill="none" stroke="#666" stroke-width="1.1" /><g transform="translate(15,485)"><path d="M240.2 79 H235.6 Q233.6 79 233.6 77 V64.6 Q233.6 62.6 235.6 62.6 H241.5 L246.3 67.6 V69.8" fill="none" stroke="#5c5c5c" stroke-width="1.55" /><path d="M240.8 62.6 L246.3 68.2 H240.8 Z" fill="#5c5c5c" /><path d="M236.4 72 H243.4 M236.4 75.6 H240.4" fill="none" stroke="#5c5c5c" stroke-width="1.6" stroke-linecap="round"/><path d="M241.2 80.2 L247.2 74.2" fill="none" stroke="#5c5c5c" stroke-width="2.6" /><path d="M247.9 73.4 L249 72.3" fill="none" stroke="#5c5c5c" stroke-width="2.0" /><rect x="262" y="61.1" width="7.8" height="2.8" fill="#5c5c5c" /><rect x="257.1" y="63.6" width="17.6" height="2.3" fill="#5c5c5c" /><path d="M258.4 68.1 H273.4 V80.8 H258.4 Z M262 69.6 V79.1 H264.1 V69.6 Z M268 69.6 V79.1 H270.1 V69.6 Z" fill="#5c5c5c" fill-rule="evenodd"/><path d="M295.8 60.9 H289.2 Q287.4 60.9 287.4 62.7 V76.2 Q287.4 78 289.2 78 H298.6 Q300.4 78 300.4 76.2 V66" fill="none" stroke="#5c5c5c" stroke-width="1.5" /><path d="M295.3 60.9 L300.6 66.4 H295.3 Z" fill="#5c5c5c" /><path d="M290.6 70.2 H297 M290.6 73.7 H294.3" fill="none" stroke="#5c5c5c" stroke-width="1.5" stroke-linecap="round"/><path d="M283.8 64.2 V78.6 Q283.8 80.8 286 80.8 H299.2" fill="none" stroke="#5c5c5c" stroke-width="1.5" /></g><rect x="325" y="545" width="1" height="22" fill="#d2d2d2" /><rect x="331.5" y="543.5" width="25" height="25" fill="#cce8fb" stroke="#a3d3f9" stroke-width="1"/><g transform="translate(15.4,485)"><rect x="320.3" y="61.7" width="17.2" height="1.2" fill="#5c5c5c" /><path d="M321.3 65 H336.3 L330.9 71.6 V79.8 L327.8 78.3 V71.6 Z" fill="#5c5c5c" /></g><g transform="translate(15,485)"><path d="M361.4 66 V63 H349.8 L355.6 71.3 L349.2 79.2 H361.6 V75.8" fill="none" stroke="#5c5c5c" stroke-width="2.0" stroke-linejoin="miter"/><circle cx="381.3" cy="64.2" r="2.4" fill="#5c5c5c" /><path d="M381.3 66 V73.2 M373.5 73.6 V70.6 H388.7 V73.6" fill="none" stroke="#5c5c5c" stroke-width="1.3" /><circle cx="373.3" cy="78" r="2.4" fill="#5c5c5c" /><circle cx="381.3" cy="78" r="2.4" fill="#5c5c5c" /><circle cx="388.6" cy="78" r="2.4" fill="#5c5c5c" /><rect x="398" y="62" width="15" height="3" fill="#5c5c5c" /><rect x="398" y="66.8" width="15" height="2.8" fill="#5c5c5c" /><rect x="398.5" y="71.3" width="14" height="3.6" fill="#fff" stroke="#6a6a6a" stroke-width="1"/><rect x="398" y="75.4" width="14" height="1.4" fill="#9a9a9a" /><rect x="398" y="77.2" width="14.5" height="3" fill="#5c5c5c" /><path d="M411.8 75.2 L415 78.8" fill="none" stroke="#5c5c5c" stroke-width="1.2" /></g><rect x="439" y="545" width="1" height="22" fill="#d2d2d2" /><g transform="translate(15,485)"><path d="M433.9 62.2 H452 V79.7 H433.9 Z M435 65.8 V69.2 H439.7 V65.8 Z M440.8 65.8 V69.2 H445.1 V65.8 Z M446.4 65.8 V69.2 H451 V65.8 Z M435 70.3 V73.7 H439.7 V70.3 Z M440.8 70.3 V73.7 H445.1 V70.3 Z M446.4 70.3 V73.7 H451 V70.3 Z M435 74.8 V78.2 H439.7 V74.8 Z M440.8 74.8 V78.2 H445.1 V74.8 Z M446.4 74.8 V78.2 H451 V74.8 Z" fill="#5c5c5c" fill-rule="evenodd"/></g><g transform="translate(15.4,485)"><path d="M459 63 H463.4 L466.2 67.8 L469.2 63 H473.2 L468.2 71 L473 79 H469 L466 74 L463 79 H458.2 L464 71 Z" fill="#5c5c5c" /><path d="M468.6 71.2 H475.2 V68.8 L480 72.7 L475.2 76.6 V73.5 H468.6 Z" fill="#5c5c5c" /></g><rect x="501" y="545" width="1" height="22" fill="#d2d2d2" /><path d="M511.2 551.6 H518.4 V566 H511.2 Z" fill="#5c5c5c" /><circle cx="512.9" cy="553.4" r="0.9" fill="#f3f4f6" /><circle cx="516.6" cy="553.4" r="0.9" fill="#f3f4f6" /><circle cx="512.9" cy="557.2" r="0.9" fill="#f3f4f6" /><circle cx="516.6" cy="557.2" r="0.9" fill="#f3f4f6" /><circle cx="512.9" cy="561" r="0.9" fill="#f3f4f6" /><circle cx="516.6" cy="561" r="0.9" fill="#f3f4f6" /><circle cx="512.9" cy="564.4" r="0.9" fill="#f3f4f6" /><circle cx="516.6" cy="564.4" r="0.9" fill="#f3f4f6" /><rect x="522.4" y="546.6" width="4.6" height="2.6" fill="#5c5c5c" /><path d="M520.6 550 H528.8 V552 Q531 553 531 555.4 V564.8 Q531 566.4 529.4 566.4 H520 Q518.4 566.4 518.4 564.8 V555.4 Q518.4 553 520.6 552 Z" fill="#5c5c5c" stroke="#f3f4f6" stroke-width="0.8"/><rect x="519.2" y="557.2" width="11" height="4.2" fill="#f3f4f6" /><path d="M542.6 550.2 L537.8 556.4 L542.6 562.4" fill="none" stroke="#5c5c5c" stroke-width="1.6" /><path d="M549.6 548.4 H556.6 V554.8 L549.4 562.2 L543 556 Z" fill="none" stroke="#5c5c5c" stroke-width="1.6" /><circle cx="553.4" cy="551.6" r="1.0" fill="#5c5c5c" /><g transform="translate(0,485)"><g transform="translate(-71.69999999999993,0)"><path d="M637.7 62 H652.2 V80.4 H637.7 Z" fill="none" stroke="#5c5c5c" stroke-width="1.6" /><rect x="640.5" y="64.2" width="9.4" height="3.4" fill="none" stroke="#5c5c5c" stroke-width="1.2"/><circle cx="641.3" cy="70.4" r="0.95" fill="#5c5c5c" /><circle cx="645.0" cy="70.4" r="0.95" fill="#5c5c5c" /><circle cx="648.7" cy="70.4" r="0.95" fill="#5c5c5c" /><circle cx="641.3" cy="73.8" r="0.95" fill="#5c5c5c" /><circle cx="645.0" cy="73.8" r="0.95" fill="#5c5c5c" /><circle cx="648.7" cy="73.8" r="0.95" fill="#5c5c5c" /><circle cx="641.3" cy="77.2" r="0.95" fill="#5c5c5c" /><circle cx="645.0" cy="77.2" r="0.95" fill="#5c5c5c" /><circle cx="648.7" cy="77.2" r="0.95" fill="#5c5c5c" /></g></g><path d="M590.2 555.2 L594.2 559.2 L598.2 555.2" fill="none" stroke="#666" stroke-width="1.1" /><rect x="605" y="545" width="1" height="22" fill="#d2d2d2" /><rect x="616" y="547.2" width="13" height="13" fill="none" stroke="#777" stroke-width="1.1" stroke-dasharray="2 1.6"/><path d="M623.2 554 L632.2 558.4 L628.4 559.6 L631.6 563.8 L630 565.2 L626.8 561 L624.6 563.6 Z" fill="#5c5c5c" /><path d="M642 549 H658 Q660 549 660 551 V561 Q660 563 658 563 H642 Q640 563 640 561 V551 Q640 549 642 549 Z" fill="none" stroke="#5c5c5c" stroke-width="1.3" /><rect x="643" y="551" width="1.2" height="10" fill="#666" /><rect x="645.2" y="551" width="0.8" height="10" fill="#666" /><rect x="647" y="551" width="1.6" height="10" fill="#666" /><rect x="649.6" y="551" width="0.8" height="10" fill="#666" /><rect x="651.2" y="551" width="1.2" height="10" fill="#666" /><rect x="653.4" y="551" width="0.8" height="10" fill="#666" /><rect x="655" y="551" width="1.6" height="10" fill="#666" /><path d="M667 555.2 L671 559.2 L675 555.2" fill="none" stroke="#666" stroke-width="1.1" /><rect x="682" y="545" width="1" height="22" fill="#d2d2d2" /><g transform="translate(-103,485)"><g transform="translate(0,0)"><path d="M802 73.2 Q797 72.2 793.5 67.8 Q798.6 62 804.2 62 Q810 62 814.6 67.8 Q813.8 69.3 812 70.3" fill="none" stroke="#5c5c5c" stroke-width="1.3" /><circle cx="804.1" cy="67.6" r="2.5" fill="none" stroke="#5c5c5c" stroke-width="1.2"/><circle cx="808.7" cy="75.4" r="3.1" fill="none" stroke="#5c5c5c" stroke-width="1.3"/><rect x="807.95" y="70.3" width="1.5" height="1.8" fill="#5c5c5c" transform="rotate(0 808.7 75.4)"/><rect x="807.95" y="70.3" width="1.5" height="1.8" fill="#5c5c5c" transform="rotate(45 808.7 75.4)"/><rect x="807.95" y="70.3" width="1.5" height="1.8" fill="#5c5c5c" transform="rotate(90 808.7 75.4)"/><rect x="807.95" y="70.3" width="1.5" height="1.8" fill="#5c5c5c" transform="rotate(135 808.7 75.4)"/><rect x="807.95" y="70.3" width="1.5" height="1.8" fill="#5c5c5c" transform="rotate(180 808.7 75.4)"/><rect x="807.95" y="70.3" width="1.5" height="1.8" fill="#5c5c5c" transform="rotate(225 808.7 75.4)"/><rect x="807.95" y="70.3" width="1.5" height="1.8" fill="#5c5c5c" transform="rotate(270 808.7 75.4)"/><rect x="807.95" y="70.3" width="1.5" height="1.8" fill="#5c5c5c" transform="rotate(315 808.7 75.4)"/><circle cx="808.7" cy="75.4" r="0.55" fill="#5c5c5c" /><path d="M826.8 62.8 H839.6 V79.4 H826.8 Z" fill="none" stroke="#5c5c5c" stroke-width="1.3" /><path d="M829.6 70.4 H836.6" fill="none" stroke="#5c5c5c" stroke-width="1.6" /><path d="M826.6 64.4 L820.8 65.8 L822.6 80 L837.4 79.8" fill="none" stroke="#5c5c5c" stroke-width="1.2" /><path d="M826.6 66 L823 66.8 L824.4 79.6" fill="none" stroke="#5c5c5c" stroke-width="1.0" /><ellipse cx="855.5" cy="65.2" rx="8.6" ry="3.4" fill="none" stroke="#5c5c5c" stroke-width="1.3"/><path d="M846.9 65.2 V76.6 Q847.6 79.6 853 79.8 M864.1 65.2 V71.4" fill="none" stroke="#5c5c5c" stroke-width="1.3" /><path d="M846.9 69.6 Q848.8 73 855.5 73 Q862 73 864.1 69.6 M846.9 73.8 Q848.4 76.4 854 76.8" fill="none" stroke="#5c5c5c" stroke-width="1.1" /><path d="M857.4 75.6 Q858.6 72.4 861.4 72.4 Q864 72.4 865 75" fill="none" stroke="#5c5c5c" stroke-width="1.3" /><path d="M865.6 72.2 L865.6 76 L862 75.6 Z" fill="#5c5c5c" /><path d="M864.2 77.6 Q863 80.6 860.4 80.6 Q857.8 80.6 856.8 78" fill="none" stroke="#5c5c5c" stroke-width="1.3" /><path d="M856.2 80.8 L856.2 77 L859.8 77.4 Z" fill="#5c5c5c" /></g></g></svg></body></html>
